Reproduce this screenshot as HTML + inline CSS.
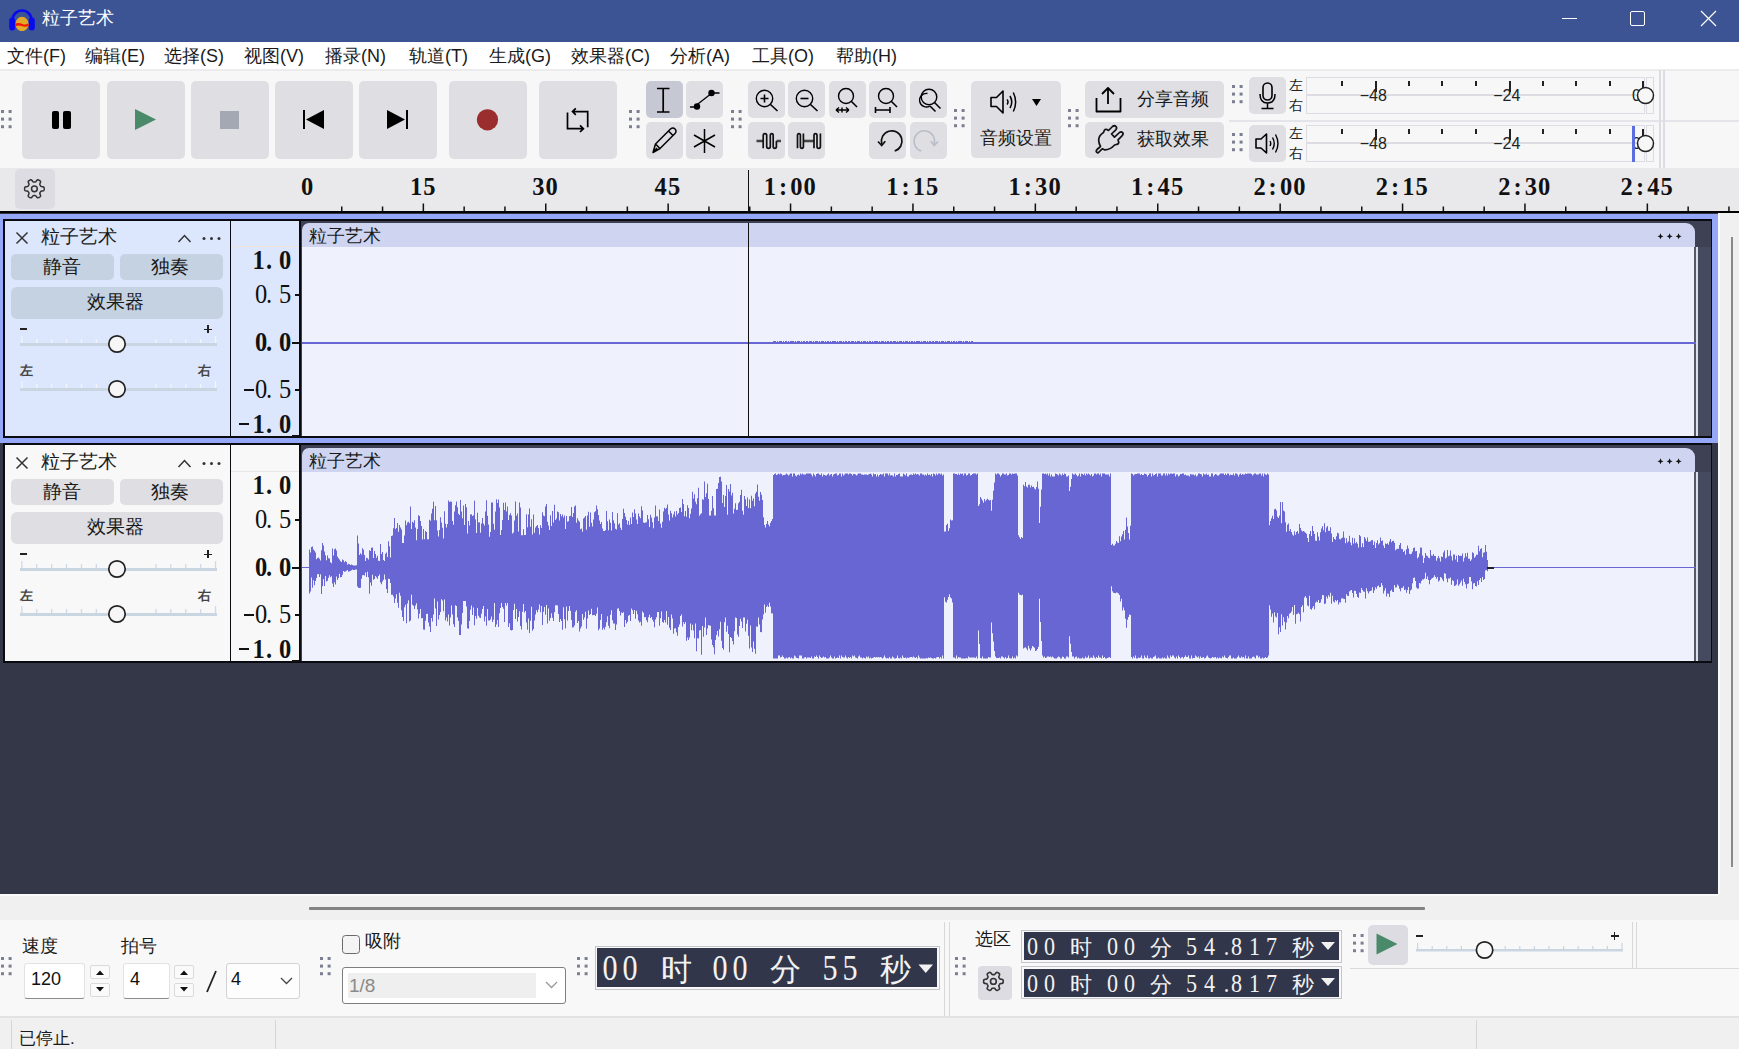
<!DOCTYPE html><html><head><meta charset="utf-8"><style>
html,body{margin:0;padding:0;width:1739px;height:1049px;overflow:hidden;background:#f0f0f0;font-family:"Liberation Sans",sans-serif}
</style></head><body>
<div style="position:absolute;left:0px;top:0px;width:1739px;height:41.5px;background:#3c5494;"></div>
<svg style="position:absolute;left:8px;top:5px;" width="28" height="26" viewBox="0 0 28 26"><path d="M4.5 15 A9.5 9.5 0 0 1 23.5 15" fill="none" stroke="#0a0af0" stroke-width="2.6"/>
<rect x="1.2" y="12.5" width="6" height="13" rx="3" fill="#0a0af0"/><rect x="20.8" y="12.5" width="6" height="13" rx="3" fill="#0a0af0"/>
<ellipse cx="14" cy="19" rx="6.6" ry="7.2" fill="#e4a92a"/><path d="M7.5 20 Q10 18.5 14 20 Q18 21.5 20.5 19.5" stroke="#f21a00" stroke-width="2.4" fill="none"/></svg>
<div style="position:absolute;left:42px;top:9px;font-family:'Liberation Sans',sans-serif;font-size:18px;color:#fff;white-space:nowrap;line-height:1;">粒子艺术</div>
<div style="position:absolute;left:1562px;top:17.6px;width:15px;height:1.2px;background:#fff;"></div>
<div style="position:absolute;left:1630px;top:11px;width:15px;height:15px;background:transparent;border:1.3px solid #fff;border-radius:2px;box-sizing:border-box"></div>
<svg style="position:absolute;left:1700px;top:10px;" width="18" height="18" viewBox="0 0 18 18"><path d="M1 1 L16 16 M16 1 L1 16" stroke="#fff" stroke-width="1.2"/></svg>
<div style="position:absolute;left:0px;top:41.5px;width:1739px;height:27.5px;background:#ffffff;"></div>
<div style="position:absolute;left:7px;top:47px;font-family:'Liberation Sans',sans-serif;font-size:18px;color:#1a1a1a;white-space:nowrap;line-height:1;font-weight:500">文件(F)</div>
<div style="position:absolute;left:85px;top:47px;font-family:'Liberation Sans',sans-serif;font-size:18px;color:#1a1a1a;white-space:nowrap;line-height:1;font-weight:500">编辑(E)</div>
<div style="position:absolute;left:164px;top:47px;font-family:'Liberation Sans',sans-serif;font-size:18px;color:#1a1a1a;white-space:nowrap;line-height:1;font-weight:500">选择(S)</div>
<div style="position:absolute;left:244px;top:47px;font-family:'Liberation Sans',sans-serif;font-size:18px;color:#1a1a1a;white-space:nowrap;line-height:1;font-weight:500">视图(V)</div>
<div style="position:absolute;left:325px;top:47px;font-family:'Liberation Sans',sans-serif;font-size:18px;color:#1a1a1a;white-space:nowrap;line-height:1;font-weight:500">播录(N)</div>
<div style="position:absolute;left:409px;top:47px;font-family:'Liberation Sans',sans-serif;font-size:18px;color:#1a1a1a;white-space:nowrap;line-height:1;font-weight:500">轨道(T)</div>
<div style="position:absolute;left:489px;top:47px;font-family:'Liberation Sans',sans-serif;font-size:18px;color:#1a1a1a;white-space:nowrap;line-height:1;font-weight:500">生成(G)</div>
<div style="position:absolute;left:571px;top:47px;font-family:'Liberation Sans',sans-serif;font-size:18px;color:#1a1a1a;white-space:nowrap;line-height:1;font-weight:500">效果器(C)</div>
<div style="position:absolute;left:670px;top:47px;font-family:'Liberation Sans',sans-serif;font-size:18px;color:#1a1a1a;white-space:nowrap;line-height:1;font-weight:500">分析(A)</div>
<div style="position:absolute;left:752px;top:47px;font-family:'Liberation Sans',sans-serif;font-size:18px;color:#1a1a1a;white-space:nowrap;line-height:1;font-weight:500">工具(O)</div>
<div style="position:absolute;left:836px;top:47px;font-family:'Liberation Sans',sans-serif;font-size:18px;color:#1a1a1a;white-space:nowrap;line-height:1;font-weight:500">帮助(H)</div>
<div style="position:absolute;left:0px;top:69px;width:1739px;height:2px;background:#ececee;"></div>
<div style="position:absolute;left:0px;top:71px;width:1739px;height:97px;background:#f7f7f7;"></div>
<svg style="position:absolute;left:1.2px;top:109.5px;" width="12" height="20" viewBox="0 0 12 20"><rect x="0.0" y="0.0" width="3" height="3" fill="#7c7f91"/><rect x="0.0" y="7.6" width="3" height="3" fill="#7c7f91"/><rect x="0.0" y="15.2" width="3" height="3" fill="#7c7f91"/><rect x="7.6" y="0.0" width="3" height="3" fill="#7c7f91"/><rect x="7.6" y="7.6" width="3" height="3" fill="#7c7f91"/><rect x="7.6" y="15.2" width="3" height="3" fill="#7c7f91"/></svg>
<div style="position:absolute;left:22px;top:81px;width:78px;height:78px;background:#dedee3;border-radius:5px"></div>
<div style="position:absolute;left:106.5px;top:81px;width:78px;height:78px;background:#dedee3;border-radius:5px"></div>
<div style="position:absolute;left:190.5px;top:81px;width:78px;height:78px;background:#dedee3;border-radius:5px"></div>
<div style="position:absolute;left:275px;top:81px;width:78px;height:78px;background:#dedee3;border-radius:5px"></div>
<div style="position:absolute;left:359px;top:81px;width:78px;height:78px;background:#dedee3;border-radius:5px"></div>
<div style="position:absolute;left:449px;top:81px;width:78px;height:78px;background:#dedee3;border-radius:5px"></div>
<div style="position:absolute;left:539px;top:81px;width:78px;height:78px;background:#dedee3;border-radius:5px"></div>
<div style="position:absolute;left:52px;top:111px;width:7px;height:18px;background:#000;border-radius:2px"></div>
<div style="position:absolute;left:63px;top:111px;width:8px;height:18px;background:#000;border-radius:2px"></div>
<svg style="position:absolute;left:134px;top:108px;" width="24" height="24" viewBox="0 0 24 24"><path d="M1 1 L22 11.5 L1 22 Z" fill="#4a8a6b"/></svg>
<div style="position:absolute;left:220px;top:111px;width:19px;height:18px;background:#a4a8b2;"></div>
<div style="position:absolute;left:303px;top:110px;width:2px;height:19px;background:#000;"></div>
<svg style="position:absolute;left:306px;top:110px;" width="19" height="19" viewBox="0 0 19 19"><path d="M18 0 L18 19 L0 9.5 Z" fill="#000"/></svg>
<svg style="position:absolute;left:387px;top:110px;" width="19" height="19" viewBox="0 0 19 19"><path d="M0 0 L0 19 L18 9.5 Z" fill="#000"/></svg>
<div style="position:absolute;left:406px;top:110px;width:2px;height:19px;background:#000;"></div>
<svg style="position:absolute;left:476px;top:108px;" width="24" height="24" viewBox="0 0 24 24"><circle cx="11.5" cy="11.8" r="10.6" fill="#9a2e2e"/></svg>
<svg style="position:absolute;left:564px;top:105px;" width="28" height="30" viewBox="0 0 28 30"><path d="M8.6 6.6 L23.7 6.6 L23.7 22.3 M11.8 3.3 L8.5 6.6 L11.8 9.9 M3.5 7.6 L3.5 23.7 L19.3 23.7 M16 20.4 L19.4 23.7 L16 27" fill="none" stroke="#000" stroke-width="1.7" stroke-linejoin="miter"/></svg>
<svg style="position:absolute;left:628.8px;top:109.5px;" width="12" height="20" viewBox="0 0 12 20"><rect x="0.0" y="0.0" width="3" height="3" fill="#7c7f91"/><rect x="0.0" y="7.6" width="3" height="3" fill="#7c7f91"/><rect x="0.0" y="15.2" width="3" height="3" fill="#7c7f91"/><rect x="7.6" y="0.0" width="3" height="3" fill="#7c7f91"/><rect x="7.6" y="7.6" width="3" height="3" fill="#7c7f91"/><rect x="7.6" y="15.2" width="3" height="3" fill="#7c7f91"/></svg>
<div style="position:absolute;left:645.5px;top:81px;width:37px;height:37px;background:#c6c8d4;border-radius:5px"></div>
<div style="position:absolute;left:686px;top:81px;width:37px;height:37px;background:#dedee3;border-radius:5px"></div>
<div style="position:absolute;left:645.5px;top:122px;width:37px;height:37px;background:#dedee3;border-radius:5px"></div>
<div style="position:absolute;left:686px;top:122px;width:37px;height:37px;background:#dedee3;border-radius:5px"></div>
<svg style="position:absolute;left:650px;top:84px;" width="28" height="31" viewBox="0 0 28 31"><path d="M7 4.5 L19.5 4.5 M7 28 L19.5 28 M13.2 4.5 L13.2 28" stroke="#000" stroke-width="1.7" fill="none"/></svg>
<svg style="position:absolute;left:686px;top:84px;" width="37" height="31" viewBox="0 0 37 31"><path d="M8 23 L26 9" stroke="#000" stroke-width="1.3"/><circle cx="11" cy="22.5" r="3.2" fill="#000"/><circle cx="25.5" cy="9" r="3.2" fill="#000"/><path d="M4 23 L11 23 M25 9 L33.5 9" stroke="#000" stroke-width="1.3"/></svg>
<svg style="position:absolute;left:650px;top:126px;" width="30" height="30" viewBox="0 0 30 30"><path d="M3 26.5 L5.5 18 L20.5 3 Q23 1 25 3 Q27 5 25 7.5 L10 22.5 Z M5.5 18 L10 22.5 M18.5 5 L23 9.5 M3 26.5 L7 22" fill="none" stroke="#000" stroke-width="1.5" stroke-linejoin="round"/></svg>
<svg style="position:absolute;left:690px;top:127px;" width="30" height="30" viewBox="0 0 30 30"><path d="M14.5 2 L14.5 26 M4 8 L25 20 M4 20 L25 8" stroke="#000" stroke-width="1.5"/></svg>
<svg style="position:absolute;left:730.8px;top:109.5px;" width="12" height="20" viewBox="0 0 12 20"><rect x="0.0" y="0.0" width="3" height="3" fill="#7c7f91"/><rect x="0.0" y="7.6" width="3" height="3" fill="#7c7f91"/><rect x="0.0" y="15.2" width="3" height="3" fill="#7c7f91"/><rect x="7.6" y="0.0" width="3" height="3" fill="#7c7f91"/><rect x="7.6" y="7.6" width="3" height="3" fill="#7c7f91"/><rect x="7.6" y="15.2" width="3" height="3" fill="#7c7f91"/></svg>
<div style="position:absolute;left:747.5px;top:81px;width:37px;height:37px;background:#dedee3;border-radius:5px"></div>
<div style="position:absolute;left:788px;top:81px;width:37px;height:37px;background:#dedee3;border-radius:5px"></div>
<div style="position:absolute;left:828.5px;top:81px;width:37px;height:37px;background:#dedee3;border-radius:5px"></div>
<div style="position:absolute;left:869px;top:81px;width:37px;height:37px;background:#dedee3;border-radius:5px"></div>
<div style="position:absolute;left:909.5px;top:81px;width:37px;height:37px;background:#dedee3;border-radius:5px"></div>
<div style="position:absolute;left:747.5px;top:122px;width:37px;height:37px;background:#dedee3;border-radius:5px"></div>
<div style="position:absolute;left:788px;top:122px;width:37px;height:37px;background:#dedee3;border-radius:5px"></div>
<div style="position:absolute;left:869px;top:122px;width:37px;height:37px;background:#dedee3;border-radius:5px"></div>
<div style="position:absolute;left:909.5px;top:122px;width:37px;height:37px;background:#dedee3;border-radius:5px"></div>
<svg style="position:absolute;left:747.5px;top:81px;" width="37" height="37" viewBox="0 0 37 37"><circle cx="16.5" cy="17.5" r="8.2" fill="none" stroke="#000" stroke-width="1.4"/><path d="M22.5 23.5 L29.5 30" stroke="#000" stroke-width="1.6"/><path d="M12.5 17.5 L20.5 17.5 M16.5 13.5 L16.5 21.5" stroke="#000" stroke-width="1.6"/></svg>
<svg style="position:absolute;left:788px;top:81px;" width="37" height="37" viewBox="0 0 37 37"><circle cx="16.5" cy="17.5" r="8.2" fill="none" stroke="#000" stroke-width="1.4"/><path d="M22.5 23.5 L29.5 30" stroke="#000" stroke-width="1.6"/><path d="M12.5 17.5 L20.5 17.5" stroke="#000" stroke-width="1.6"/></svg>
<svg style="position:absolute;left:828.5px;top:81px;" width="37" height="37" viewBox="0 0 37 37"><circle cx="17" cy="15" r="7.5" fill="none" stroke="#000" stroke-width="1.4"/><path d="M22.5 20.5 L28 26" stroke="#000" stroke-width="1.6"/><path d="M7 29 L20 29 M7 29 L10 26.5 M7 29 L10 31.5 M20 29 L17 26.5 M20 29 L17 31.5 M13 26.5 L13 31.5" stroke="#000" stroke-width="1.4" fill="none"/></svg>
<svg style="position:absolute;left:869px;top:81px;" width="37" height="37" viewBox="0 0 37 37"><circle cx="17" cy="15" r="7.5" fill="none" stroke="#000" stroke-width="1.4"/><path d="M22.5 20.5 L28 26" stroke="#000" stroke-width="1.6"/><path d="M6.5 29 L21 29 M6.5 26 L6.5 32 M21 26 L21 32" stroke="#000" stroke-width="1.6" fill="none"/></svg>
<svg style="position:absolute;left:909.5px;top:81px;" width="37" height="37" viewBox="0 0 37 37"><circle cx="19" cy="16" r="7.8" fill="none" stroke="#000" stroke-width="1.4"/><path d="M17.5 12.5 A6.8 6.8 0 1 0 20 25" fill="none" stroke="#000" stroke-width="1.4"/><path d="M24.5 21.5 L30.5 27.5 M20 25 L25.5 30.5" stroke="#000" stroke-width="1.5"/></svg>
<svg style="position:absolute;left:747.5px;top:122px;" width="37" height="37" viewBox="0 0 37 37"><path d="M8.5 19 L15 19 M28.5 19 L33 19" stroke="#444" stroke-width="2.6"/><path d="M15.2 26.3 L15.2 13.5 Q15.2 11.6 17 11.6 Q18.7 11.6 18.7 13.5 L18.7 24.5 Q18.7 26.3 20.5 26.3 Q22.3 26.3 22.3 24.5 L22.3 13.5 Q22.3 11.6 23.75 11.6 Q25.2 11.6 25.2 13.5 L25.2 24.5 Q25.2 26.3 26.8 26.3 Q28.4 26.3 28.4 24.5 L28.4 19" fill="none" stroke="#111" stroke-width="1.7"/></svg>
<svg style="position:absolute;left:788px;top:122px;" width="37" height="37" viewBox="0 0 37 37"><path d="M15.4 19 L26 19" stroke="#444" stroke-width="2.6"/><path d="M9.5 26.3 L9.5 13.5 Q9.5 11.6 11 11.6 Q12.4 11.6 12.4 13.5 L12.4 24.5 Q12.4 26.3 13.9 26.3 Q15.4 26.3 15.4 24.5 L15.4 11.6 M26 26.3 L26 13.5 Q26 11.6 27.5 11.6 Q29 11.6 29 13.5 L29 24.5 Q29 26.3 30.7 26.3 Q32.4 26.3 32.4 24.5 L32.4 11.6" fill="none" stroke="#111" stroke-width="1.7"/></svg>
<svg style="position:absolute;left:869px;top:122px;" width="37" height="37" viewBox="0 0 37 37"><path d="M12.8 22 A10.3 10.3 0 1 1 25.7 29" fill="none" stroke="#111" stroke-width="1.7"/><path d="M9 19.5 L12.7 23.5 L16.3 19.2" fill="none" stroke="#111" stroke-width="1.7"/></svg>
<svg style="position:absolute;left:909.5px;top:122px;" width="37" height="37" viewBox="0 0 37 37"><path d="M24.2 22 A10.3 10.3 0 1 0 11.3 29" fill="none" stroke="#b9bdc9" stroke-width="1.6"/><path d="M28 19.5 L24.3 23.5 L20.7 19.2" fill="none" stroke="#b9bdc9" stroke-width="1.6"/></svg>
<svg style="position:absolute;left:954.3px;top:109.3px;" width="12" height="20" viewBox="0 0 12 20"><rect x="0.0" y="0.0" width="3" height="3" fill="#7c7f91"/><rect x="0.0" y="7.6" width="3" height="3" fill="#7c7f91"/><rect x="0.0" y="15.2" width="3" height="3" fill="#7c7f91"/><rect x="7.6" y="0.0" width="3" height="3" fill="#7c7f91"/><rect x="7.6" y="7.6" width="3" height="3" fill="#7c7f91"/><rect x="7.6" y="15.2" width="3" height="3" fill="#7c7f91"/></svg>
<div style="position:absolute;left:971px;top:81px;width:90px;height:77px;background:#dedee3;border-radius:5px"></div>
<svg style="position:absolute;left:987px;top:87px;" width="40" height="30" viewBox="0 0 40 30"><path d="M4 10.5 L9.5 10.5 L16 4 L16 26 L9.5 19.5 L4 19.5 Z" fill="none" stroke="#000" stroke-width="1.6" stroke-linejoin="round"/><path d="M20 12.5 Q22 15 20 17.5 M23 9 Q26.5 15 23 21 M26.3 5.5 Q31 15 26.3 24.5" fill="none" stroke="#000" stroke-width="1.5"/></svg>
<svg style="position:absolute;left:1031px;top:98px;" width="12" height="9" viewBox="0 0 12 9"><path d="M1 1 L10 1 L5.5 8 Z" fill="#000"/></svg>
<div style="position:absolute;left:980px;top:128.5px;font-family:'Liberation Sans',sans-serif;font-size:18px;color:#1a1a1a;white-space:nowrap;line-height:1;font-weight:500">音频设置</div>
<svg style="position:absolute;left:1068.2px;top:108.9px;" width="12" height="20" viewBox="0 0 12 20"><rect x="0.0" y="0.0" width="3" height="3" fill="#7c7f91"/><rect x="0.0" y="7.6" width="3" height="3" fill="#7c7f91"/><rect x="0.0" y="15.2" width="3" height="3" fill="#7c7f91"/><rect x="7.6" y="0.0" width="3" height="3" fill="#7c7f91"/><rect x="7.6" y="7.6" width="3" height="3" fill="#7c7f91"/><rect x="7.6" y="15.2" width="3" height="3" fill="#7c7f91"/></svg>
<div style="position:absolute;left:1085px;top:81px;width:139px;height:37px;background:#dedee3;border-radius:5px"></div>
<div style="position:absolute;left:1085px;top:122px;width:139px;height:36px;background:#dedee3;border-radius:5px"></div>
<svg style="position:absolute;left:1094px;top:84px;" width="30" height="30" viewBox="0 0 30 30"><path d="M14 4 L14 20 M8 10 L14 4 L20 10" fill="none" stroke="#000" stroke-width="1.8" stroke-linejoin="round"/><path d="M2.5 14 L2.5 27.5 L26.5 27.5 L26.5 14" fill="none" stroke="#000" stroke-width="1.8" stroke-linejoin="round"/></svg>
<div style="position:absolute;left:1137px;top:90px;font-family:'Liberation Sans',sans-serif;font-size:18px;color:#1a1a1a;white-space:nowrap;line-height:1;font-weight:500">分享音频</div>
<svg style="position:absolute;left:1090px;top:120px;" width="40" height="40" viewBox="0 0 40 40"><path d="M7 32.5 Q5.5 31 7 29.5 L10.5 26.5 Q7.5 21 9.5 16.5 Q11 14 13.5 12.5 L14.5 10 Q15.5 8.8 17 9.6 L18.5 10.5 L22.5 6.5 Q24.5 5 26 6.5 Q27.3 8 25.8 9.8 L21.5 14 L24.5 17.2 L29.5 12.5 Q31.3 11.2 32.6 12.6 Q33.8 14.2 32 15.8 L28 19.8 L28.8 22.5 Q28.5 24 27 24.3 L24.6 25 Q20 30 14.5 29.8 L12.2 28.8 L9 32 Q8 33.5 7 32.5 Z" fill="none" stroke="#111" stroke-width="1.7" stroke-linejoin="round"/></svg>
<div style="position:absolute;left:1137px;top:130px;font-family:'Liberation Sans',sans-serif;font-size:18px;color:#1a1a1a;white-space:nowrap;line-height:1;font-weight:500">获取效果</div>
<svg style="position:absolute;left:1231.9px;top:85.2px;" width="12" height="20" viewBox="0 0 12 20"><rect x="0.0" y="0.0" width="3" height="3" fill="#7c7f91"/><rect x="0.0" y="7.6" width="3" height="3" fill="#7c7f91"/><rect x="0.0" y="15.2" width="3" height="3" fill="#7c7f91"/><rect x="7.6" y="0.0" width="3" height="3" fill="#7c7f91"/><rect x="7.6" y="7.6" width="3" height="3" fill="#7c7f91"/><rect x="7.6" y="15.2" width="3" height="3" fill="#7c7f91"/></svg>
<svg style="position:absolute;left:1231.9px;top:133.1px;" width="12" height="20" viewBox="0 0 12 20"><rect x="0.0" y="0.0" width="3" height="3" fill="#7c7f91"/><rect x="0.0" y="7.6" width="3" height="3" fill="#7c7f91"/><rect x="0.0" y="15.2" width="3" height="3" fill="#7c7f91"/><rect x="7.6" y="0.0" width="3" height="3" fill="#7c7f91"/><rect x="7.6" y="7.6" width="3" height="3" fill="#7c7f91"/><rect x="7.6" y="15.2" width="3" height="3" fill="#7c7f91"/></svg>
<div style="position:absolute;left:1249px;top:77px;width:37px;height:37px;background:#dedee3;border-radius:5px"></div>
<div style="position:absolute;left:1249px;top:125px;width:37px;height:37px;background:#dedee3;border-radius:5px"></div>
<svg style="position:absolute;left:1249px;top:77px;" width="37" height="37" viewBox="0 0 37 37"><rect x="14" y="6" width="9" height="17" rx="4.5" fill="none" stroke="#000" stroke-width="1.6"/><path d="M11 17 Q11 26 18.5 26 Q26 26 26 17 M18.5 26 L18.5 31 M12.5 31.5 L24.5 31.5" fill="none" stroke="#000" stroke-width="1.5"/></svg>
<svg style="position:absolute;left:1249px;top:125px;" width="37" height="37" viewBox="0 0 37 37"><path d="M7 14 L12 14 L17.5 9 L17.5 28 L12 23 L7 23 Z" fill="none" stroke="#000" stroke-width="1.6" stroke-linejoin="round"/><path d="M21 16 Q22.5 18.5 21 21 M23.5 12.5 Q27 18.5 23.5 24.5 M26.5 9.5 Q31.5 18.5 26.5 27.5" fill="none" stroke="#000" stroke-width="1.4"/></svg>
<div style="position:absolute;left:1229px;top:120px;width:510px;height:2px;background:#e4e4ea;"></div>
<div style="position:absolute;left:1289px;top:78px;font-family:'Liberation Sans',sans-serif;font-size:14px;color:#222;white-space:nowrap;line-height:1;">左</div>
<div style="position:absolute;left:1289px;top:98px;font-family:'Liberation Sans',sans-serif;font-size:14px;color:#222;white-space:nowrap;line-height:1;">右</div>
<div style="position:absolute;left:1305.5px;top:77px;width:339px;height:37px;background:transparent;border:1.5px solid #dcdce2;box-sizing:border-box"></div>
<div style="position:absolute;left:1307px;top:94px;width:336px;height:2px;background:#dcdce2;"></div>
<div style="position:absolute;left:1646px;top:77px;width:8px;height:37px;background:transparent;border:1.5px solid #dcdce2;box-sizing:border-box"></div>
<div style="position:absolute;left:1341px;top:81px;width:2px;height:5px;background:#222;"></div>
<div style="position:absolute;left:1408.4px;top:81px;width:2px;height:5px;background:#222;"></div>
<div style="position:absolute;left:1441.4px;top:81px;width:2px;height:5px;background:#222;"></div>
<div style="position:absolute;left:1474.5px;top:81px;width:2px;height:5px;background:#222;"></div>
<div style="position:absolute;left:1541.9px;top:81px;width:2px;height:5px;background:#222;"></div>
<div style="position:absolute;left:1574.9px;top:81px;width:2px;height:5px;background:#222;"></div>
<div style="position:absolute;left:1609.3px;top:81px;width:2px;height:5px;background:#222;"></div>
<div style="position:absolute;left:1375px;top:81px;width:2px;height:11px;background:#222;"></div>
<div style="position:absolute;left:1508.5px;top:81px;width:2px;height:11px;background:#222;"></div>
<div style="position:absolute;left:1642px;top:81px;width:2px;height:11px;background:#222;"></div>
<div style="position:absolute;left:1359.7px;top:88.3px;font-family:'Liberation Sans',sans-serif;font-size:16px;color:#222;white-space:nowrap;line-height:1;">&#8722;48</div>
<div style="position:absolute;left:1493.2px;top:88.3px;font-family:'Liberation Sans',sans-serif;font-size:16px;color:#222;white-space:nowrap;line-height:1;">&#8722;24</div>
<div style="position:absolute;left:1632px;top:88.3px;font-family:'Liberation Sans',sans-serif;font-size:16px;color:#222;white-space:nowrap;line-height:1;">0</div>
<svg style="position:absolute;left:1636px;top:86px;" width="20" height="20" viewBox="0 0 20 20"><circle cx="9.5" cy="9.5" r="8" fill="#f7f7f7" stroke="#222" stroke-width="1.5"/></svg>
<div style="position:absolute;left:1289px;top:126px;font-family:'Liberation Sans',sans-serif;font-size:14px;color:#222;white-space:nowrap;line-height:1;">左</div>
<div style="position:absolute;left:1289px;top:146px;font-family:'Liberation Sans',sans-serif;font-size:14px;color:#222;white-space:nowrap;line-height:1;">右</div>
<div style="position:absolute;left:1305.5px;top:125px;width:339px;height:37px;background:transparent;border:1.5px solid #dcdce2;box-sizing:border-box"></div>
<div style="position:absolute;left:1307px;top:142px;width:336px;height:2px;background:#dcdce2;"></div>
<div style="position:absolute;left:1646px;top:125px;width:8px;height:37px;background:transparent;border:1.5px solid #dcdce2;box-sizing:border-box"></div>
<div style="position:absolute;left:1341px;top:129px;width:2px;height:5px;background:#222;"></div>
<div style="position:absolute;left:1408.4px;top:129px;width:2px;height:5px;background:#222;"></div>
<div style="position:absolute;left:1441.4px;top:129px;width:2px;height:5px;background:#222;"></div>
<div style="position:absolute;left:1474.5px;top:129px;width:2px;height:5px;background:#222;"></div>
<div style="position:absolute;left:1541.9px;top:129px;width:2px;height:5px;background:#222;"></div>
<div style="position:absolute;left:1574.9px;top:129px;width:2px;height:5px;background:#222;"></div>
<div style="position:absolute;left:1609.3px;top:129px;width:2px;height:5px;background:#222;"></div>
<div style="position:absolute;left:1375px;top:129px;width:2px;height:11px;background:#222;"></div>
<div style="position:absolute;left:1508.5px;top:129px;width:2px;height:11px;background:#222;"></div>
<div style="position:absolute;left:1642px;top:129px;width:2px;height:11px;background:#222;"></div>
<div style="position:absolute;left:1359.7px;top:136.3px;font-family:'Liberation Sans',sans-serif;font-size:16px;color:#222;white-space:nowrap;line-height:1;">&#8722;48</div>
<div style="position:absolute;left:1493.2px;top:136.3px;font-family:'Liberation Sans',sans-serif;font-size:16px;color:#222;white-space:nowrap;line-height:1;">&#8722;24</div>
<div style="position:absolute;left:1632px;top:136.3px;font-family:'Liberation Sans',sans-serif;font-size:16px;color:#222;white-space:nowrap;line-height:1;">0</div>
<svg style="position:absolute;left:1636px;top:134px;" width="20" height="20" viewBox="0 0 20 20"><circle cx="9.5" cy="9.5" r="8" fill="#f7f7f7" stroke="#222" stroke-width="1.5"/></svg>
<div style="position:absolute;left:1632px;top:126px;width:3px;height:36px;background:#5b6ee0;"></div>
<div style="position:absolute;left:1659px;top:70px;width:1.5px;height:98px;background:#dcdce2;"></div>
<div style="position:absolute;left:1663px;top:70px;width:1.5px;height:98px;background:#dcdce2;"></div>
<div style="position:absolute;left:0px;top:168px;width:1739px;height:44px;background:#e9e9ec;"></div>
<div style="position:absolute;left:15px;top:169px;width:40px;height:40px;background:#dcdce2;border-radius:5px"></div>
<svg style="position:absolute;left:19px;top:174px;" width="30" height="30" viewBox="0 0 30 30"><g transform="translate(15.4,14.8)"><path d="M9.80 0.00 L9.79 0.43 L9.74 0.85 L9.65 1.27 L9.44 1.67 L8.95 1.98 L8.02 2.15 L7.09 2.24 L6.59 2.40 L6.34 2.63 L6.18 2.88 L6.04 3.14 L5.89 3.40 L5.74 3.66 L5.59 3.91 L5.45 4.18 L5.37 4.51 L5.48 5.02 L5.87 5.87 L6.19 6.76 L6.16 7.35 L5.93 7.72 L5.61 8.01 L5.26 8.26 L4.90 8.49 L4.52 8.69 L4.13 8.86 L3.73 8.99 L3.28 9.01 L2.76 8.74 L2.15 8.02 L1.61 7.26 L1.22 6.90 L0.90 6.81 L0.59 6.79 L0.30 6.80 L0.00 6.80 L-0.30 6.80 L-0.59 6.79 L-0.90 6.81 L-1.22 6.90 L-1.61 7.26 L-2.15 8.02 L-2.76 8.74 L-3.28 9.01 L-3.73 8.99 L-4.13 8.86 L-4.52 8.69 L-4.90 8.49 L-5.26 8.26 L-5.61 8.01 L-5.93 7.72 L-6.16 7.35 L-6.19 6.76 L-5.87 5.87 L-5.48 5.02 L-5.37 4.51 L-5.45 4.18 L-5.59 3.91 L-5.74 3.66 L-5.89 3.40 L-6.04 3.14 L-6.18 2.88 L-6.34 2.63 L-6.59 2.40 L-7.09 2.24 L-8.02 2.15 L-8.95 1.98 L-9.44 1.67 L-9.65 1.27 L-9.74 0.85 L-9.79 0.43 L-9.80 0.00 L-9.79 -0.43 L-9.74 -0.85 L-9.65 -1.27 L-9.44 -1.67 L-8.95 -1.98 L-8.02 -2.15 L-7.09 -2.24 L-6.59 -2.40 L-6.34 -2.63 L-6.18 -2.88 L-6.04 -3.14 L-5.89 -3.40 L-5.74 -3.66 L-5.59 -3.91 L-5.45 -4.18 L-5.37 -4.51 L-5.48 -5.02 L-5.87 -5.87 L-6.19 -6.76 L-6.16 -7.35 L-5.93 -7.72 L-5.61 -8.01 L-5.26 -8.26 L-4.90 -8.49 L-4.52 -8.69 L-4.13 -8.86 L-3.73 -8.99 L-3.28 -9.01 L-2.76 -8.74 L-2.15 -8.02 L-1.61 -7.26 L-1.22 -6.90 L-0.90 -6.81 L-0.59 -6.79 L-0.30 -6.80 L-0.00 -6.80 L0.30 -6.80 L0.59 -6.79 L0.90 -6.81 L1.22 -6.90 L1.61 -7.26 L2.15 -8.02 L2.76 -8.74 L3.28 -9.01 L3.73 -8.99 L4.13 -8.86 L4.52 -8.69 L4.90 -8.49 L5.26 -8.26 L5.61 -8.01 L5.93 -7.72 L6.16 -7.35 L6.19 -6.76 L5.87 -5.87 L5.48 -5.02 L5.37 -4.51 L5.45 -4.18 L5.59 -3.91 L5.74 -3.66 L5.89 -3.40 L6.04 -3.14 L6.18 -2.88 L6.34 -2.63 L6.59 -2.40 L7.09 -2.24 L8.02 -2.15 L8.95 -1.98 L9.44 -1.67 L9.65 -1.27 L9.74 -0.85 L9.79 -0.43 Z" fill="none" stroke="#333" stroke-width="1.5" stroke-linejoin="round"/><circle r="2.9" fill="none" stroke="#333" stroke-width="1.5"/></g></svg>
<div style="position:absolute;left:0px;top:211px;width:1739px;height:2px;background:#000;"></div>
<svg style="position:absolute;left:0px;top:168px;" width="1739" height="44" viewBox="0 0 1739 44"><g transform="translate(0,-168)"><rect x="341.0" y="206.5" width="1.5" height="4.5" fill="#111"/><rect x="381.8" y="206.5" width="1.5" height="4.5" fill="#111"/><rect x="422.6" y="203.5" width="1.5" height="7.5" fill="#111"/><rect x="463.4" y="206.5" width="1.5" height="4.5" fill="#111"/><rect x="504.2" y="206.5" width="1.5" height="4.5" fill="#111"/><rect x="545.0" y="203.5" width="1.5" height="7.5" fill="#111"/><rect x="585.8" y="206.5" width="1.5" height="4.5" fill="#111"/><rect x="626.6" y="206.5" width="1.5" height="4.5" fill="#111"/><rect x="667.4" y="203.5" width="1.5" height="7.5" fill="#111"/><rect x="708.2" y="206.5" width="1.5" height="4.5" fill="#111"/><rect x="749.0" y="206.5" width="1.5" height="4.5" fill="#111"/><rect x="789.8" y="203.5" width="1.5" height="7.5" fill="#111"/><rect x="830.6" y="206.5" width="1.5" height="4.5" fill="#111"/><rect x="871.4" y="206.5" width="1.5" height="4.5" fill="#111"/><rect x="912.2" y="203.5" width="1.5" height="7.5" fill="#111"/><rect x="953.0" y="206.5" width="1.5" height="4.5" fill="#111"/><rect x="993.8" y="206.5" width="1.5" height="4.5" fill="#111"/><rect x="1034.6" y="203.5" width="1.5" height="7.5" fill="#111"/><rect x="1075.4" y="206.5" width="1.5" height="4.5" fill="#111"/><rect x="1116.2" y="206.5" width="1.5" height="4.5" fill="#111"/><rect x="1157.0" y="203.5" width="1.5" height="7.5" fill="#111"/><rect x="1197.8" y="206.5" width="1.5" height="4.5" fill="#111"/><rect x="1238.6" y="206.5" width="1.5" height="4.5" fill="#111"/><rect x="1279.4" y="203.5" width="1.5" height="7.5" fill="#111"/><rect x="1320.2" y="206.5" width="1.5" height="4.5" fill="#111"/><rect x="1361.0" y="206.5" width="1.5" height="4.5" fill="#111"/><rect x="1401.8" y="203.5" width="1.5" height="7.5" fill="#111"/><rect x="1442.6" y="206.5" width="1.5" height="4.5" fill="#111"/><rect x="1483.4" y="206.5" width="1.5" height="4.5" fill="#111"/><rect x="1524.2" y="203.5" width="1.5" height="7.5" fill="#111"/><rect x="1565.0" y="206.5" width="1.5" height="4.5" fill="#111"/><rect x="1605.8" y="206.5" width="1.5" height="4.5" fill="#111"/><rect x="1646.6" y="203.5" width="1.5" height="7.5" fill="#111"/><rect x="1687.4" y="206.5" width="1.5" height="4.5" fill="#111"/><rect x="1728.2" y="206.5" width="1.5" height="4.5" fill="#111"/></g></svg>
<div style="position:absolute;left:282.5px;top:174.1px;font-family:'Liberation Serif',serif;font-size:24.5px;color:#111;white-space:nowrap;line-height:1;width:49.0px;text-align:center;font-weight:bold;transform:scale(1.0,1.07);transform-origin:50% 12.7px;">0</div>
<div style="position:absolute;left:391.5px;top:174.1px;font-family:'Liberation Serif',serif;font-size:24.5px;color:#111;white-space:nowrap;line-height:1;width:49.0px;text-align:center;font-weight:bold;transform:scale(1.0,1.07);transform-origin:50% 12.7px;">1</div>
<div style="position:absolute;left:404.8px;top:174.1px;font-family:'Liberation Serif',serif;font-size:24.5px;color:#111;white-space:nowrap;line-height:1;width:49.0px;text-align:center;font-weight:bold;transform:scale(1.0,1.07);transform-origin:50% 12.7px;">5</div>
<div style="position:absolute;left:513.9px;top:174.1px;font-family:'Liberation Serif',serif;font-size:24.5px;color:#111;white-space:nowrap;line-height:1;width:49.0px;text-align:center;font-weight:bold;transform:scale(1.0,1.07);transform-origin:50% 12.7px;">3</div>
<div style="position:absolute;left:527.1px;top:174.1px;font-family:'Liberation Serif',serif;font-size:24.5px;color:#111;white-space:nowrap;line-height:1;width:49.0px;text-align:center;font-weight:bold;transform:scale(1.0,1.07);transform-origin:50% 12.7px;">0</div>
<div style="position:absolute;left:636.2px;top:174.1px;font-family:'Liberation Serif',serif;font-size:24.5px;color:#111;white-space:nowrap;line-height:1;width:49.0px;text-align:center;font-weight:bold;transform:scale(1.0,1.07);transform-origin:50% 12.7px;">4</div>
<div style="position:absolute;left:649.5px;top:174.1px;font-family:'Liberation Serif',serif;font-size:24.5px;color:#111;white-space:nowrap;line-height:1;width:49.0px;text-align:center;font-weight:bold;transform:scale(1.0,1.07);transform-origin:50% 12.7px;">5</div>
<div style="position:absolute;left:745.3px;top:174.1px;font-family:'Liberation Serif',serif;font-size:24.5px;color:#111;white-space:nowrap;line-height:1;width:49.0px;text-align:center;font-weight:bold;transform:scale(1.0,1.07);transform-origin:50% 12.7px;">1</div>
<div style="position:absolute;left:758.6px;top:174.1px;font-family:'Liberation Serif',serif;font-size:24.5px;color:#111;white-space:nowrap;line-height:1;width:49.0px;text-align:center;font-weight:bold;transform:scale(1.0,1.07);transform-origin:50% 12.7px;">:</div>
<div style="position:absolute;left:771.9px;top:174.1px;font-family:'Liberation Serif',serif;font-size:24.5px;color:#111;white-space:nowrap;line-height:1;width:49.0px;text-align:center;font-weight:bold;transform:scale(1.0,1.07);transform-origin:50% 12.7px;">0</div>
<div style="position:absolute;left:785.2px;top:174.1px;font-family:'Liberation Serif',serif;font-size:24.5px;color:#111;white-space:nowrap;line-height:1;width:49.0px;text-align:center;font-weight:bold;transform:scale(1.0,1.07);transform-origin:50% 12.7px;">0</div>
<div style="position:absolute;left:867.8px;top:174.1px;font-family:'Liberation Serif',serif;font-size:24.5px;color:#111;white-space:nowrap;line-height:1;width:49.0px;text-align:center;font-weight:bold;transform:scale(1.0,1.07);transform-origin:50% 12.7px;">1</div>
<div style="position:absolute;left:881.0px;top:174.1px;font-family:'Liberation Serif',serif;font-size:24.5px;color:#111;white-space:nowrap;line-height:1;width:49.0px;text-align:center;font-weight:bold;transform:scale(1.0,1.07);transform-origin:50% 12.7px;">:</div>
<div style="position:absolute;left:894.4px;top:174.1px;font-family:'Liberation Serif',serif;font-size:24.5px;color:#111;white-space:nowrap;line-height:1;width:49.0px;text-align:center;font-weight:bold;transform:scale(1.0,1.07);transform-origin:50% 12.7px;">1</div>
<div style="position:absolute;left:907.6px;top:174.1px;font-family:'Liberation Serif',serif;font-size:24.5px;color:#111;white-space:nowrap;line-height:1;width:49.0px;text-align:center;font-weight:bold;transform:scale(1.0,1.07);transform-origin:50% 12.7px;">5</div>
<div style="position:absolute;left:990.1px;top:174.1px;font-family:'Liberation Serif',serif;font-size:24.5px;color:#111;white-space:nowrap;line-height:1;width:49.0px;text-align:center;font-weight:bold;transform:scale(1.0,1.07);transform-origin:50% 12.7px;">1</div>
<div style="position:absolute;left:1003.4px;top:174.1px;font-family:'Liberation Serif',serif;font-size:24.5px;color:#111;white-space:nowrap;line-height:1;width:49.0px;text-align:center;font-weight:bold;transform:scale(1.0,1.07);transform-origin:50% 12.7px;">:</div>
<div style="position:absolute;left:1016.7px;top:174.1px;font-family:'Liberation Serif',serif;font-size:24.5px;color:#111;white-space:nowrap;line-height:1;width:49.0px;text-align:center;font-weight:bold;transform:scale(1.0,1.07);transform-origin:50% 12.7px;">3</div>
<div style="position:absolute;left:1030.0px;top:174.1px;font-family:'Liberation Serif',serif;font-size:24.5px;color:#111;white-space:nowrap;line-height:1;width:49.0px;text-align:center;font-weight:bold;transform:scale(1.0,1.07);transform-origin:50% 12.7px;">0</div>
<div style="position:absolute;left:1112.5px;top:174.1px;font-family:'Liberation Serif',serif;font-size:24.5px;color:#111;white-space:nowrap;line-height:1;width:49.0px;text-align:center;font-weight:bold;transform:scale(1.0,1.07);transform-origin:50% 12.7px;">1</div>
<div style="position:absolute;left:1125.8px;top:174.1px;font-family:'Liberation Serif',serif;font-size:24.5px;color:#111;white-space:nowrap;line-height:1;width:49.0px;text-align:center;font-weight:bold;transform:scale(1.0,1.07);transform-origin:50% 12.7px;">:</div>
<div style="position:absolute;left:1139.1px;top:174.1px;font-family:'Liberation Serif',serif;font-size:24.5px;color:#111;white-space:nowrap;line-height:1;width:49.0px;text-align:center;font-weight:bold;transform:scale(1.0,1.07);transform-origin:50% 12.7px;">4</div>
<div style="position:absolute;left:1152.5px;top:174.1px;font-family:'Liberation Serif',serif;font-size:24.5px;color:#111;white-space:nowrap;line-height:1;width:49.0px;text-align:center;font-weight:bold;transform:scale(1.0,1.07);transform-origin:50% 12.7px;">5</div>
<div style="position:absolute;left:1235.0px;top:174.1px;font-family:'Liberation Serif',serif;font-size:24.5px;color:#111;white-space:nowrap;line-height:1;width:49.0px;text-align:center;font-weight:bold;transform:scale(1.0,1.07);transform-origin:50% 12.7px;">2</div>
<div style="position:absolute;left:1248.2px;top:174.1px;font-family:'Liberation Serif',serif;font-size:24.5px;color:#111;white-space:nowrap;line-height:1;width:49.0px;text-align:center;font-weight:bold;transform:scale(1.0,1.07);transform-origin:50% 12.7px;">:</div>
<div style="position:absolute;left:1261.5px;top:174.1px;font-family:'Liberation Serif',serif;font-size:24.5px;color:#111;white-space:nowrap;line-height:1;width:49.0px;text-align:center;font-weight:bold;transform:scale(1.0,1.07);transform-origin:50% 12.7px;">0</div>
<div style="position:absolute;left:1274.9px;top:174.1px;font-family:'Liberation Serif',serif;font-size:24.5px;color:#111;white-space:nowrap;line-height:1;width:49.0px;text-align:center;font-weight:bold;transform:scale(1.0,1.07);transform-origin:50% 12.7px;">0</div>
<div style="position:absolute;left:1357.3px;top:174.1px;font-family:'Liberation Serif',serif;font-size:24.5px;color:#111;white-space:nowrap;line-height:1;width:49.0px;text-align:center;font-weight:bold;transform:scale(1.0,1.07);transform-origin:50% 12.7px;">2</div>
<div style="position:absolute;left:1370.6px;top:174.1px;font-family:'Liberation Serif',serif;font-size:24.5px;color:#111;white-space:nowrap;line-height:1;width:49.0px;text-align:center;font-weight:bold;transform:scale(1.0,1.07);transform-origin:50% 12.7px;">:</div>
<div style="position:absolute;left:1383.9px;top:174.1px;font-family:'Liberation Serif',serif;font-size:24.5px;color:#111;white-space:nowrap;line-height:1;width:49.0px;text-align:center;font-weight:bold;transform:scale(1.0,1.07);transform-origin:50% 12.7px;">1</div>
<div style="position:absolute;left:1397.2px;top:174.1px;font-family:'Liberation Serif',serif;font-size:24.5px;color:#111;white-space:nowrap;line-height:1;width:49.0px;text-align:center;font-weight:bold;transform:scale(1.0,1.07);transform-origin:50% 12.7px;">5</div>
<div style="position:absolute;left:1479.8px;top:174.1px;font-family:'Liberation Serif',serif;font-size:24.5px;color:#111;white-space:nowrap;line-height:1;width:49.0px;text-align:center;font-weight:bold;transform:scale(1.0,1.07);transform-origin:50% 12.7px;">2</div>
<div style="position:absolute;left:1493.0px;top:174.1px;font-family:'Liberation Serif',serif;font-size:24.5px;color:#111;white-space:nowrap;line-height:1;width:49.0px;text-align:center;font-weight:bold;transform:scale(1.0,1.07);transform-origin:50% 12.7px;">:</div>
<div style="position:absolute;left:1506.3px;top:174.1px;font-family:'Liberation Serif',serif;font-size:24.5px;color:#111;white-space:nowrap;line-height:1;width:49.0px;text-align:center;font-weight:bold;transform:scale(1.0,1.07);transform-origin:50% 12.7px;">3</div>
<div style="position:absolute;left:1519.7px;top:174.1px;font-family:'Liberation Serif',serif;font-size:24.5px;color:#111;white-space:nowrap;line-height:1;width:49.0px;text-align:center;font-weight:bold;transform:scale(1.0,1.07);transform-origin:50% 12.7px;">0</div>
<div style="position:absolute;left:1602.2px;top:174.1px;font-family:'Liberation Serif',serif;font-size:24.5px;color:#111;white-space:nowrap;line-height:1;width:49.0px;text-align:center;font-weight:bold;transform:scale(1.0,1.07);transform-origin:50% 12.7px;">2</div>
<div style="position:absolute;left:1615.5px;top:174.1px;font-family:'Liberation Serif',serif;font-size:24.5px;color:#111;white-space:nowrap;line-height:1;width:49.0px;text-align:center;font-weight:bold;transform:scale(1.0,1.07);transform-origin:50% 12.7px;">:</div>
<div style="position:absolute;left:1628.8px;top:174.1px;font-family:'Liberation Serif',serif;font-size:24.5px;color:#111;white-space:nowrap;line-height:1;width:49.0px;text-align:center;font-weight:bold;transform:scale(1.0,1.07);transform-origin:50% 12.7px;">4</div>
<div style="position:absolute;left:1642.1px;top:174.1px;font-family:'Liberation Serif',serif;font-size:24.5px;color:#111;white-space:nowrap;line-height:1;width:49.0px;text-align:center;font-weight:bold;transform:scale(1.0,1.07);transform-origin:50% 12.7px;">5</div>
<div style="position:absolute;left:747.5px;top:170px;width:1.5px;height:42px;background:#111;"></div>
<div style="position:absolute;left:0px;top:213px;width:1718px;height:681px;background:#343748;"></div>
<div style="position:absolute;left:1718px;top:213px;width:21px;height:681px;background:#f0f0f0;"></div>
<div style="position:absolute;left:1718px;top:213px;width:1.5px;height:681px;background:#fafafa;"></div>
<div style="position:absolute;left:1730.5px;top:237px;width:2.8px;height:630px;background:#8a8a8a;"></div>
<div style="position:absolute;left:0px;top:214px;width:1717.5px;height:229px;background:#95a7f7;"></div>
<div style="position:absolute;left:3px;top:219px;width:1709px;height:219px;background:#0a0b10;"></div>
<div style="position:absolute;left:5px;top:221px;width:225px;height:215px;background:#dce6fc;"></div>
<div style="position:absolute;left:231.3px;top:221px;width:67.5px;height:215px;background:#dce6fc;"></div>
<div style="position:absolute;left:301.2px;top:221px;width:1409.5px;height:215px;background:#3e4153;"></div>
<div style="position:absolute;left:1697.5px;top:247px;width:13.2px;height:189px;background:#464a5e;"></div>
<div style="position:absolute;left:302px;top:222.5px;width:1393px;height:24.5px;background:#cfd5f1;border-top-left-radius:7px;border-top-right-radius:9px"></div>
<div style="position:absolute;left:302px;top:247px;width:1392px;height:189px;background:#eff1fd;"></div>
<div style="position:absolute;left:1694px;top:247px;width:2px;height:189px;background:#555a66;"></div>
<div style="position:absolute;left:1696px;top:247px;width:1.5px;height:189px;background:#dfe1ea;"></div>
<svg style="position:absolute;left:14px;top:230px;" width="18" height="16" viewBox="0 0 18 16"><path d="M2.5 2.5 L13.5 13.5 M13.5 2.5 L2.5 13.5" stroke="#333" stroke-width="1.5"/></svg>
<div style="position:absolute;left:41px;top:227px;font-family:'Liberation Sans',sans-serif;font-size:19px;color:#1a1a1a;white-space:nowrap;line-height:1;">粒子艺术</div>
<svg style="position:absolute;left:174px;top:231px;" width="20" height="14" viewBox="0 0 20 14"><path d="M4.5 11 L10.5 4.5 L16.5 11" fill="none" stroke="#333" stroke-width="1.5"/></svg>
<svg style="position:absolute;left:200px;top:234px;" width="24" height="8" viewBox="0 0 24 8"><circle cx="4" cy="4.5" r="1.5" fill="#333"/><circle cx="11.5" cy="4.5" r="1.5" fill="#333"/><circle cx="19" cy="4.5" r="1.5" fill="#333"/></svg>
<div style="position:absolute;left:11px;top:254px;width:103px;height:26px;background:#c4d2e2;border-radius:5px"></div>
<div style="position:absolute;left:120px;top:254px;width:103px;height:26px;background:#c4d2e2;border-radius:5px"></div>
<div style="position:absolute;left:11px;top:287px;width:212px;height:32px;background:#c4d2e2;border-radius:6px"></div>
<div style="position:absolute;left:43px;top:257px;font-family:'Liberation Sans',sans-serif;font-size:19px;color:#1a1a1a;white-space:nowrap;line-height:1;">静音</div>
<div style="position:absolute;left:151px;top:257px;font-family:'Liberation Sans',sans-serif;font-size:19px;color:#1a1a1a;white-space:nowrap;line-height:1;">独奏</div>
<div style="position:absolute;left:87px;top:292px;font-family:'Liberation Sans',sans-serif;font-size:19px;color:#1a1a1a;white-space:nowrap;line-height:1;">效果器</div>
<div style="position:absolute;left:19.5px;top:328px;width:7px;height:1.8px;background:#222;"></div>
<div style="position:absolute;left:204px;top:328.5px;width:8px;height:1.8px;background:#222;"></div>
<div style="position:absolute;left:207.2px;top:325.3px;width:1.8px;height:8px;background:#222;"></div>
<div style="position:absolute;left:20px;top:365px;font-family:'Liberation Sans',sans-serif;font-size:12.5px;color:#444;white-space:nowrap;line-height:1;font-weight:bold">左</div>
<div style="position:absolute;left:198px;top:365px;font-family:'Liberation Sans',sans-serif;font-size:12.5px;color:#444;white-space:nowrap;line-height:1;font-weight:bold">右</div>
<svg style="position:absolute;left:19.5px;top:334.7px;" width="200" height="12" viewBox="0 0 200 12"><rect x="0" y="8" width="197" height="3" fill="#c9d5e1"/><rect x="1.2" y="1" width="1.3" height="7" fill="#f2f5f9"/><rect x="16.1" y="4" width="1.3" height="4" fill="#f2f5f9"/><rect x="31.0" y="4" width="1.3" height="4" fill="#f2f5f9"/><rect x="45.9" y="4" width="1.3" height="4" fill="#f2f5f9"/><rect x="60.8" y="4" width="1.3" height="4" fill="#f2f5f9"/><rect x="75.7" y="4" width="1.3" height="4" fill="#f2f5f9"/><rect x="90.6" y="4" width="1.3" height="4" fill="#f2f5f9"/><rect x="135.3" y="4" width="1.3" height="4" fill="#f2f5f9"/><rect x="150.2" y="4" width="1.3" height="4" fill="#f2f5f9"/><rect x="165.1" y="4" width="1.3" height="4" fill="#f2f5f9"/><rect x="180.0" y="4" width="1.3" height="4" fill="#f2f5f9"/><rect x="194.9" y="1" width="1.3" height="7" fill="#f2f5f9"/></svg>
<svg style="position:absolute;left:107px;top:333.7px;" width="20" height="20" viewBox="0 0 20 20"><circle cx="10" cy="10" r="8.2" fill="#f6f6f6" stroke="#222" stroke-width="1.7"/></svg>
<svg style="position:absolute;left:19.5px;top:379.6px;" width="200" height="12" viewBox="0 0 200 12"><rect x="0" y="8" width="197" height="3" fill="#c9d5e1"/><rect x="1.2" y="1" width="1.3" height="7" fill="#f2f5f9"/><rect x="16.1" y="4" width="1.3" height="4" fill="#f2f5f9"/><rect x="31.0" y="4" width="1.3" height="4" fill="#f2f5f9"/><rect x="45.9" y="4" width="1.3" height="4" fill="#f2f5f9"/><rect x="60.8" y="4" width="1.3" height="4" fill="#f2f5f9"/><rect x="75.7" y="4" width="1.3" height="4" fill="#f2f5f9"/><rect x="90.6" y="4" width="1.3" height="4" fill="#f2f5f9"/><rect x="135.3" y="4" width="1.3" height="4" fill="#f2f5f9"/><rect x="150.2" y="4" width="1.3" height="4" fill="#f2f5f9"/><rect x="165.1" y="4" width="1.3" height="4" fill="#f2f5f9"/><rect x="180.0" y="4" width="1.3" height="4" fill="#f2f5f9"/><rect x="194.9" y="1" width="1.3" height="7" fill="#f2f5f9"/></svg>
<svg style="position:absolute;left:107px;top:378.6px;" width="20" height="20" viewBox="0 0 20 20"><circle cx="10" cy="10" r="8.2" fill="#f6f6f6" stroke="#222" stroke-width="1.7"/></svg>
<div style="position:absolute;left:231.3px;top:246px;width:67.5px;height:1px;background:#f0e4da;"></div>
<div style="position:absolute;left:234.0px;top:247.7px;font-family:'Liberation Serif',serif;font-size:24.5px;color:#111;white-space:nowrap;line-height:1;width:49.0px;text-align:center;font-weight:bold;transform:scale(1.0,1.08);transform-origin:50% 12.7px;">1</div>
<div style="position:absolute;left:244.5px;top:247.7px;font-family:'Liberation Serif',serif;font-size:24.5px;color:#111;white-space:nowrap;line-height:1;width:49.0px;text-align:center;font-weight:bold;transform:scale(1.0,1.08);transform-origin:50% 12.7px;">.</div>
<div style="position:absolute;left:260.5px;top:247.7px;font-family:'Liberation Serif',serif;font-size:24.5px;color:#111;white-space:nowrap;line-height:1;width:49.0px;text-align:center;font-weight:bold;transform:scale(1.0,1.08);transform-origin:50% 12.7px;">0</div>
<div style="position:absolute;left:236.5px;top:281.8px;font-family:'Liberation Serif',serif;font-size:24.5px;color:#111;white-space:nowrap;line-height:1;width:49.0px;text-align:center;font-weight:normal;transform:scale(1.0,1.08);transform-origin:50% 12.7px;">0</div>
<div style="position:absolute;left:244.5px;top:281.8px;font-family:'Liberation Serif',serif;font-size:24.5px;color:#111;white-space:nowrap;line-height:1;width:49.0px;text-align:center;font-weight:normal;transform:scale(1.0,1.08);transform-origin:50% 12.7px;">.</div>
<div style="position:absolute;left:260.5px;top:281.8px;font-family:'Liberation Serif',serif;font-size:24.5px;color:#111;white-space:nowrap;line-height:1;width:49.0px;text-align:center;font-weight:normal;transform:scale(1.0,1.08);transform-origin:50% 12.7px;">5</div>
<div style="position:absolute;left:236.5px;top:330.3px;font-family:'Liberation Serif',serif;font-size:24.5px;color:#111;white-space:nowrap;line-height:1;width:49.0px;text-align:center;font-weight:bold;transform:scale(1.0,1.08);transform-origin:50% 12.7px;">0</div>
<div style="position:absolute;left:244.5px;top:330.3px;font-family:'Liberation Serif',serif;font-size:24.5px;color:#111;white-space:nowrap;line-height:1;width:49.0px;text-align:center;font-weight:bold;transform:scale(1.0,1.08);transform-origin:50% 12.7px;">.</div>
<div style="position:absolute;left:260.5px;top:330.3px;font-family:'Liberation Serif',serif;font-size:24.5px;color:#111;white-space:nowrap;line-height:1;width:49.0px;text-align:center;font-weight:bold;transform:scale(1.0,1.08);transform-origin:50% 12.7px;">0</div>
<div style="position:absolute;left:243.7px;top:388.8px;width:10px;height:2px;background:#111;"></div>
<div style="position:absolute;left:236.5px;top:377.1px;font-family:'Liberation Serif',serif;font-size:24.5px;color:#111;white-space:nowrap;line-height:1;width:49.0px;text-align:center;font-weight:normal;transform:scale(1.0,1.08);transform-origin:50% 12.7px;">0</div>
<div style="position:absolute;left:244.5px;top:377.1px;font-family:'Liberation Serif',serif;font-size:24.5px;color:#111;white-space:nowrap;line-height:1;width:49.0px;text-align:center;font-weight:normal;transform:scale(1.0,1.08);transform-origin:50% 12.7px;">.</div>
<div style="position:absolute;left:260.5px;top:377.1px;font-family:'Liberation Serif',serif;font-size:24.5px;color:#111;white-space:nowrap;line-height:1;width:49.0px;text-align:center;font-weight:normal;transform:scale(1.0,1.08);transform-origin:50% 12.7px;">5</div>
<div style="position:absolute;left:238.6px;top:423.2px;width:10px;height:2px;background:#111;"></div>
<div style="position:absolute;left:234.0px;top:411.5px;font-family:'Liberation Serif',serif;font-size:24.5px;color:#111;white-space:nowrap;line-height:1;width:49.0px;text-align:center;font-weight:bold;transform:scale(1.0,1.08);transform-origin:50% 12.7px;">1</div>
<div style="position:absolute;left:244.5px;top:411.5px;font-family:'Liberation Serif',serif;font-size:24.5px;color:#111;white-space:nowrap;line-height:1;width:49.0px;text-align:center;font-weight:bold;transform:scale(1.0,1.08);transform-origin:50% 12.7px;">.</div>
<div style="position:absolute;left:260.5px;top:411.5px;font-family:'Liberation Serif',serif;font-size:24.5px;color:#111;white-space:nowrap;line-height:1;width:49.0px;text-align:center;font-weight:bold;transform:scale(1.0,1.08);transform-origin:50% 12.7px;">0</div>
<div style="position:absolute;left:292px;top:341.5px;width:7px;height:2.5px;background:#111;"></div>
<div style="position:absolute;left:294.5px;top:294px;width:4.5px;height:1.5px;background:#111;"></div>
<div style="position:absolute;left:294.5px;top:389px;width:4.5px;height:1.5px;background:#111;"></div>
<div style="position:absolute;left:292px;top:434.5px;width:7px;height:2px;background:#111;"></div>
<div style="position:absolute;left:309px;top:227px;font-family:'Liberation Sans',sans-serif;font-size:18px;color:#1a1a1a;white-space:nowrap;line-height:1;">粒子艺术</div>
<svg style="position:absolute;left:1655px;top:230px;" width="30" height="12" viewBox="0 0 30 12"><g fill="#111"><path transform="translate(5.5,6.3)" d="M0 -3 L0.9 -0.9 L3 0 L0.9 0.9 L0 3 L-0.9 0.9 L-3 0 L-0.9 -0.9 Z"/><path transform="translate(14.6,6.3)" d="M0 -3 L0.9 -0.9 L3 0 L0.9 0.9 L0 3 L-0.9 0.9 L-3 0 L-0.9 -0.9 Z"/><path transform="translate(23.6,6.3)" d="M0 -3 L0.9 -0.9 L3 0 L0.9 0.9 L0 3 L-0.9 0.9 L-3 0 L-0.9 -0.9 Z"/></g></svg>
<div style="position:absolute;left:302px;top:342.3px;width:1394px;height:1.3px;background:#6766d3;"></div>
<div style="position:absolute;left:747.5px;top:222.5px;width:1.6px;height:214px;background:#111;"></div>
<svg style="position:absolute;left:773px;top:340.5px;" width="201" height="3" viewBox="0 0 201 3"><rect x="0" y="0" width="3" height="3" fill="#6766d3"/><rect x="4" y="0" width="1" height="3" fill="#6766d3"/><rect x="6" y="0" width="3" height="3" fill="#6766d3"/><rect x="10" y="0" width="1" height="3" fill="#6766d3"/><rect x="12" y="0" width="2" height="3" fill="#6766d3"/><rect x="15" y="0" width="1" height="3" fill="#6766d3"/><rect x="17" y="0" width="4" height="3" fill="#6766d3"/><rect x="22" y="0" width="1" height="3" fill="#6766d3"/><rect x="24" y="0" width="3" height="3" fill="#6766d3"/><rect x="28" y="0" width="1" height="3" fill="#6766d3"/><rect x="30" y="0" width="2" height="3" fill="#6766d3"/><rect x="33" y="0" width="2" height="3" fill="#6766d3"/><rect x="36" y="0" width="3" height="3" fill="#6766d3"/><rect x="40" y="0" width="1" height="3" fill="#6766d3"/><rect x="42" y="0" width="3" height="3" fill="#6766d3"/><rect x="46" y="0" width="1" height="3" fill="#6766d3"/><rect x="48" y="0" width="3" height="3" fill="#6766d3"/><rect x="52" y="0" width="1" height="3" fill="#6766d3"/><rect x="54" y="0" width="2" height="3" fill="#6766d3"/><rect x="57" y="0" width="1" height="3" fill="#6766d3"/><rect x="59" y="0" width="4" height="3" fill="#6766d3"/><rect x="64" y="0" width="1" height="3" fill="#6766d3"/><rect x="66" y="0" width="3" height="3" fill="#6766d3"/><rect x="70" y="0" width="1" height="3" fill="#6766d3"/><rect x="72" y="0" width="2" height="3" fill="#6766d3"/><rect x="75" y="0" width="2" height="3" fill="#6766d3"/><rect x="78" y="0" width="3" height="3" fill="#6766d3"/><rect x="82" y="0" width="1" height="3" fill="#6766d3"/><rect x="84" y="0" width="3" height="3" fill="#6766d3"/><rect x="88" y="0" width="1" height="3" fill="#6766d3"/><rect x="90" y="0" width="3" height="3" fill="#6766d3"/><rect x="94" y="0" width="1" height="3" fill="#6766d3"/><rect x="96" y="0" width="2" height="3" fill="#6766d3"/><rect x="99" y="0" width="1" height="3" fill="#6766d3"/><rect x="101" y="0" width="4" height="3" fill="#6766d3"/><rect x="106" y="0" width="1" height="3" fill="#6766d3"/><rect x="108" y="0" width="3" height="3" fill="#6766d3"/><rect x="112" y="0" width="1" height="3" fill="#6766d3"/><rect x="114" y="0" width="2" height="3" fill="#6766d3"/><rect x="117" y="0" width="2" height="3" fill="#6766d3"/><rect x="120" y="0" width="3" height="3" fill="#6766d3"/><rect x="124" y="0" width="1" height="3" fill="#6766d3"/><rect x="126" y="0" width="3" height="3" fill="#6766d3"/><rect x="130" y="0" width="1" height="3" fill="#6766d3"/><rect x="132" y="0" width="3" height="3" fill="#6766d3"/><rect x="136" y="0" width="1" height="3" fill="#6766d3"/><rect x="138" y="0" width="2" height="3" fill="#6766d3"/><rect x="141" y="0" width="1" height="3" fill="#6766d3"/><rect x="143" y="0" width="4" height="3" fill="#6766d3"/><rect x="148" y="0" width="1" height="3" fill="#6766d3"/><rect x="150" y="0" width="3" height="3" fill="#6766d3"/><rect x="154" y="0" width="1" height="3" fill="#6766d3"/><rect x="156" y="0" width="2" height="3" fill="#6766d3"/><rect x="159" y="0" width="2" height="3" fill="#6766d3"/><rect x="162" y="0" width="3" height="3" fill="#6766d3"/><rect x="166" y="0" width="1" height="3" fill="#6766d3"/><rect x="168" y="0" width="3" height="3" fill="#6766d3"/><rect x="172" y="0" width="1" height="3" fill="#6766d3"/><rect x="174" y="0" width="3" height="3" fill="#6766d3"/><rect x="178" y="0" width="1" height="3" fill="#6766d3"/><rect x="180" y="0" width="2" height="3" fill="#6766d3"/><rect x="183" y="0" width="1" height="3" fill="#6766d3"/><rect x="185" y="0" width="4" height="3" fill="#6766d3"/><rect x="190" y="0" width="1" height="3" fill="#6766d3"/><rect x="192" y="0" width="3" height="3" fill="#6766d3"/><rect x="196" y="0" width="1" height="3" fill="#6766d3"/><rect x="198" y="0" width="2" height="3" fill="#6766d3"/></svg>
<div style="position:absolute;left:3px;top:443px;width:1709px;height:220px;background:#0a0b10;"></div>
<div style="position:absolute;left:5px;top:445px;width:225px;height:216px;background:#f8f8f8;"></div>
<div style="position:absolute;left:231.3px;top:445px;width:67.5px;height:216px;background:#f8f8f8;"></div>
<div style="position:absolute;left:301.2px;top:445px;width:1409.5px;height:216px;background:#3e4153;"></div>
<div style="position:absolute;left:1697.5px;top:472px;width:13.2px;height:189px;background:#464a5e;"></div>
<div style="position:absolute;left:302px;top:447.5px;width:1393px;height:24.5px;background:#cfd5f1;border-top-left-radius:7px;border-top-right-radius:9px"></div>
<div style="position:absolute;left:302px;top:472px;width:1392px;height:189px;background:#eff1fd;"></div>
<div style="position:absolute;left:1694px;top:472px;width:2px;height:189px;background:#555a66;"></div>
<div style="position:absolute;left:1696px;top:472px;width:1.5px;height:189px;background:#dfe1ea;"></div>
<svg style="position:absolute;left:14px;top:455px;" width="18" height="16" viewBox="0 0 18 16"><path d="M2.5 2.5 L13.5 13.5 M13.5 2.5 L2.5 13.5" stroke="#333" stroke-width="1.5"/></svg>
<div style="position:absolute;left:41px;top:452px;font-family:'Liberation Sans',sans-serif;font-size:19px;color:#1a1a1a;white-space:nowrap;line-height:1;">粒子艺术</div>
<svg style="position:absolute;left:174px;top:456px;" width="20" height="14" viewBox="0 0 20 14"><path d="M4.5 11 L10.5 4.5 L16.5 11" fill="none" stroke="#333" stroke-width="1.5"/></svg>
<svg style="position:absolute;left:200px;top:459px;" width="24" height="8" viewBox="0 0 24 8"><circle cx="4" cy="4.5" r="1.5" fill="#333"/><circle cx="11.5" cy="4.5" r="1.5" fill="#333"/><circle cx="19" cy="4.5" r="1.5" fill="#333"/></svg>
<div style="position:absolute;left:11px;top:479px;width:103px;height:26px;background:#dedee3;border-radius:5px"></div>
<div style="position:absolute;left:120px;top:479px;width:103px;height:26px;background:#dedee3;border-radius:5px"></div>
<div style="position:absolute;left:11px;top:512px;width:212px;height:32px;background:#dedee3;border-radius:6px"></div>
<div style="position:absolute;left:43px;top:482px;font-family:'Liberation Sans',sans-serif;font-size:19px;color:#1a1a1a;white-space:nowrap;line-height:1;">静音</div>
<div style="position:absolute;left:151px;top:482px;font-family:'Liberation Sans',sans-serif;font-size:19px;color:#1a1a1a;white-space:nowrap;line-height:1;">独奏</div>
<div style="position:absolute;left:87px;top:517px;font-family:'Liberation Sans',sans-serif;font-size:19px;color:#1a1a1a;white-space:nowrap;line-height:1;">效果器</div>
<div style="position:absolute;left:19.5px;top:553px;width:7px;height:1.8px;background:#222;"></div>
<div style="position:absolute;left:204px;top:553.5px;width:8px;height:1.8px;background:#222;"></div>
<div style="position:absolute;left:207.2px;top:550.3px;width:1.8px;height:8px;background:#222;"></div>
<div style="position:absolute;left:20px;top:590px;font-family:'Liberation Sans',sans-serif;font-size:12.5px;color:#444;white-space:nowrap;line-height:1;font-weight:bold">左</div>
<div style="position:absolute;left:198px;top:590px;font-family:'Liberation Sans',sans-serif;font-size:12.5px;color:#444;white-space:nowrap;line-height:1;font-weight:bold">右</div>
<svg style="position:absolute;left:19.5px;top:559.7px;" width="200" height="12" viewBox="0 0 200 12"><rect x="0" y="8" width="197" height="3" fill="#c9d5e1"/><rect x="1.2" y="1" width="1.3" height="7" fill="#cfdae5"/><rect x="16.1" y="4" width="1.3" height="4" fill="#cfdae5"/><rect x="31.0" y="4" width="1.3" height="4" fill="#cfdae5"/><rect x="45.9" y="4" width="1.3" height="4" fill="#cfdae5"/><rect x="60.8" y="4" width="1.3" height="4" fill="#cfdae5"/><rect x="75.7" y="4" width="1.3" height="4" fill="#cfdae5"/><rect x="90.6" y="4" width="1.3" height="4" fill="#cfdae5"/><rect x="135.3" y="4" width="1.3" height="4" fill="#cfdae5"/><rect x="150.2" y="4" width="1.3" height="4" fill="#cfdae5"/><rect x="165.1" y="4" width="1.3" height="4" fill="#cfdae5"/><rect x="180.0" y="4" width="1.3" height="4" fill="#cfdae5"/><rect x="194.9" y="1" width="1.3" height="7" fill="#cfdae5"/></svg>
<svg style="position:absolute;left:107px;top:558.7px;" width="20" height="20" viewBox="0 0 20 20"><circle cx="10" cy="10" r="8.2" fill="#f6f6f6" stroke="#222" stroke-width="1.7"/></svg>
<svg style="position:absolute;left:19.5px;top:604.6px;" width="200" height="12" viewBox="0 0 200 12"><rect x="0" y="8" width="197" height="3" fill="#c9d5e1"/><rect x="1.2" y="1" width="1.3" height="7" fill="#cfdae5"/><rect x="16.1" y="4" width="1.3" height="4" fill="#cfdae5"/><rect x="31.0" y="4" width="1.3" height="4" fill="#cfdae5"/><rect x="45.9" y="4" width="1.3" height="4" fill="#cfdae5"/><rect x="60.8" y="4" width="1.3" height="4" fill="#cfdae5"/><rect x="75.7" y="4" width="1.3" height="4" fill="#cfdae5"/><rect x="90.6" y="4" width="1.3" height="4" fill="#cfdae5"/><rect x="135.3" y="4" width="1.3" height="4" fill="#cfdae5"/><rect x="150.2" y="4" width="1.3" height="4" fill="#cfdae5"/><rect x="165.1" y="4" width="1.3" height="4" fill="#cfdae5"/><rect x="180.0" y="4" width="1.3" height="4" fill="#cfdae5"/><rect x="194.9" y="1" width="1.3" height="7" fill="#cfdae5"/></svg>
<svg style="position:absolute;left:107px;top:603.6px;" width="20" height="20" viewBox="0 0 20 20"><circle cx="10" cy="10" r="8.2" fill="#f6f6f6" stroke="#222" stroke-width="1.7"/></svg>
<div style="position:absolute;left:231.3px;top:471px;width:67.5px;height:1px;background:#e8e8e8;"></div>
<div style="position:absolute;left:234.0px;top:472.7px;font-family:'Liberation Serif',serif;font-size:24.5px;color:#111;white-space:nowrap;line-height:1;width:49.0px;text-align:center;font-weight:bold;transform:scale(1.0,1.08);transform-origin:50% 12.7px;">1</div>
<div style="position:absolute;left:244.5px;top:472.7px;font-family:'Liberation Serif',serif;font-size:24.5px;color:#111;white-space:nowrap;line-height:1;width:49.0px;text-align:center;font-weight:bold;transform:scale(1.0,1.08);transform-origin:50% 12.7px;">.</div>
<div style="position:absolute;left:260.5px;top:472.7px;font-family:'Liberation Serif',serif;font-size:24.5px;color:#111;white-space:nowrap;line-height:1;width:49.0px;text-align:center;font-weight:bold;transform:scale(1.0,1.08);transform-origin:50% 12.7px;">0</div>
<div style="position:absolute;left:236.5px;top:506.8px;font-family:'Liberation Serif',serif;font-size:24.5px;color:#111;white-space:nowrap;line-height:1;width:49.0px;text-align:center;font-weight:normal;transform:scale(1.0,1.08);transform-origin:50% 12.7px;">0</div>
<div style="position:absolute;left:244.5px;top:506.8px;font-family:'Liberation Serif',serif;font-size:24.5px;color:#111;white-space:nowrap;line-height:1;width:49.0px;text-align:center;font-weight:normal;transform:scale(1.0,1.08);transform-origin:50% 12.7px;">.</div>
<div style="position:absolute;left:260.5px;top:506.8px;font-family:'Liberation Serif',serif;font-size:24.5px;color:#111;white-space:nowrap;line-height:1;width:49.0px;text-align:center;font-weight:normal;transform:scale(1.0,1.08);transform-origin:50% 12.7px;">5</div>
<div style="position:absolute;left:236.5px;top:555.3px;font-family:'Liberation Serif',serif;font-size:24.5px;color:#111;white-space:nowrap;line-height:1;width:49.0px;text-align:center;font-weight:bold;transform:scale(1.0,1.08);transform-origin:50% 12.7px;">0</div>
<div style="position:absolute;left:244.5px;top:555.3px;font-family:'Liberation Serif',serif;font-size:24.5px;color:#111;white-space:nowrap;line-height:1;width:49.0px;text-align:center;font-weight:bold;transform:scale(1.0,1.08);transform-origin:50% 12.7px;">.</div>
<div style="position:absolute;left:260.5px;top:555.3px;font-family:'Liberation Serif',serif;font-size:24.5px;color:#111;white-space:nowrap;line-height:1;width:49.0px;text-align:center;font-weight:bold;transform:scale(1.0,1.08);transform-origin:50% 12.7px;">0</div>
<div style="position:absolute;left:243.7px;top:613.8px;width:10px;height:2px;background:#111;"></div>
<div style="position:absolute;left:236.5px;top:602.1px;font-family:'Liberation Serif',serif;font-size:24.5px;color:#111;white-space:nowrap;line-height:1;width:49.0px;text-align:center;font-weight:normal;transform:scale(1.0,1.08);transform-origin:50% 12.7px;">0</div>
<div style="position:absolute;left:244.5px;top:602.1px;font-family:'Liberation Serif',serif;font-size:24.5px;color:#111;white-space:nowrap;line-height:1;width:49.0px;text-align:center;font-weight:normal;transform:scale(1.0,1.08);transform-origin:50% 12.7px;">.</div>
<div style="position:absolute;left:260.5px;top:602.1px;font-family:'Liberation Serif',serif;font-size:24.5px;color:#111;white-space:nowrap;line-height:1;width:49.0px;text-align:center;font-weight:normal;transform:scale(1.0,1.08);transform-origin:50% 12.7px;">5</div>
<div style="position:absolute;left:238.6px;top:648.2px;width:10px;height:2px;background:#111;"></div>
<div style="position:absolute;left:234.0px;top:636.5px;font-family:'Liberation Serif',serif;font-size:24.5px;color:#111;white-space:nowrap;line-height:1;width:49.0px;text-align:center;font-weight:bold;transform:scale(1.0,1.08);transform-origin:50% 12.7px;">1</div>
<div style="position:absolute;left:244.5px;top:636.5px;font-family:'Liberation Serif',serif;font-size:24.5px;color:#111;white-space:nowrap;line-height:1;width:49.0px;text-align:center;font-weight:bold;transform:scale(1.0,1.08);transform-origin:50% 12.7px;">.</div>
<div style="position:absolute;left:260.5px;top:636.5px;font-family:'Liberation Serif',serif;font-size:24.5px;color:#111;white-space:nowrap;line-height:1;width:49.0px;text-align:center;font-weight:bold;transform:scale(1.0,1.08);transform-origin:50% 12.7px;">0</div>
<div style="position:absolute;left:292px;top:566.5px;width:7px;height:2.5px;background:#111;"></div>
<div style="position:absolute;left:294.5px;top:519px;width:4.5px;height:1.5px;background:#111;"></div>
<div style="position:absolute;left:294.5px;top:614px;width:4.5px;height:1.5px;background:#111;"></div>
<div style="position:absolute;left:292px;top:659.5px;width:7px;height:2px;background:#111;"></div>
<div style="position:absolute;left:309px;top:452px;font-family:'Liberation Sans',sans-serif;font-size:18px;color:#1a1a1a;white-space:nowrap;line-height:1;">粒子艺术</div>
<svg style="position:absolute;left:1655px;top:455px;" width="30" height="12" viewBox="0 0 30 12"><g fill="#111"><path transform="translate(5.5,6.3)" d="M0 -3 L0.9 -0.9 L3 0 L0.9 0.9 L0 3 L-0.9 0.9 L-3 0 L-0.9 -0.9 Z"/><path transform="translate(14.6,6.3)" d="M0 -3 L0.9 -0.9 L3 0 L0.9 0.9 L0 3 L-0.9 0.9 L-3 0 L-0.9 -0.9 Z"/><path transform="translate(23.6,6.3)" d="M0 -3 L0.9 -0.9 L3 0 L0.9 0.9 L0 3 L-0.9 0.9 L-3 0 L-0.9 -0.9 Z"/></g></svg>
<div style="position:absolute;left:302px;top:566.8px;width:1394px;height:1.3px;background:#6766d3;"></div>
<svg style="position:absolute;left:0px;top:0px;pointer-events:none" width="1739" height="1049" viewBox="0 0 1739 1049"><path d="M309 567.5V549.6H310V552.6H311V547.1H312V546.6H313V549.6H314V550.7H315V552.6H316V559.3H317V557.9H318V557.5H319V558.7H320V560.6H321V550.3H322V542.9H323V545.4H324V551.6H325V555.2H326V560.3H327V555.5H328V558.2H329V558.5H330V562.2H331V563.2H332V548.4H333V555.6H334V549.2H335V548.4H336V550.6H337V556.4H338V558.2H339V559.5H340V561.2H341V562.1H342V559.4H343V560.3H344V562.3H345V561.0H346V562.0H347V564.8H348V563.7H349V564.2H350V565.1H351V564.4H352V564.9H353V565.4H354V565.5H355V565.5H356V565.3H357V535.5H358V543.5H359V554.9H360V553.3H361V554.5H362V548.3H363V549.7H364V554.9H365V560.9H366V557.8H367V558.2H368V559.4H369V550.2H370V551.1H371V547.7H372V547.6H373V558.0H374V551.1H375V554.1H376V557.8H377V555.8H378V560.7H379V561.0H380V543.9H381V554.1H382V552.1H383V560.1H384V561.1H385V553.8H386V552.4H387V557.0H388V541.2H389V546.3H390V557.5H391V535.9H392V535.5H393V528.2H394V517.9H395V528.9H396V528.1H397V523.0H398V531.7H399V525.1H400V527.5H401V529.5H402V543.1H403V542.9H404V535.6H405V520.5H406V525.2H407V522.4H408V521.8H409V523.2H410V506.5H411V529.1H412V521.8H413V522.7H414V520.3H415V527.5H416V540.3H417V528.9H418V515.2H419V515.9H420V521.0H421V526.1H422V539.4H423V529.0H424V539.3H425V531.1H426V532.0H427V539.2H428V539.2H429V519.7H430V520.7H431V513.6H432V508.8H433V501.7H434V520.3H435V506.0H436V520.3H437V530.6H438V536.4H439V529.9H440V517.3H441V522.6H442V527.8H443V538.6H444V511.3H445V523.7H446V527.4H447V524.0H448V500.4H449V502.1H450V501.4H451V501.7H452V521.1H453V524.8H454V511.4H455V505.2H456V501.4H457V507.3H458V513.7H459V515.0H460V500.0H461V511.5H462V518.3H463V505.5H464V524.9H465V503.9H466V507.2H467V533.6H468V521.1H469V525.4H470V514.6H471V514.3H472V516.0H473V515.3H474V500.8H475V519.3H476V532.9H477V512.7H478V522.5H479V522.3H480V532.7H481V523.5H482V518.1H483V523.4H484V525.4H485V511.4H486V500.2H487V515.8H488V524.5H489V536.7H490V532.0H491V502.5H492V502.6H493V523.8H494V529.8H495V511.4H496V499.2H497V502.9H498V499.4H499V507.5H500V535.1H501V530.0H502V520.0H503V502.8H504V510.0H505V502.6H506V511.5H507V506.6H508V520.1H509V514.9H510V513.3H511V515.5H512V533.4H513V532.6H514V520.5H515V501.4H516V515.7H517V513.6H518V531.5H519V502.5H520V507.5H521V535.2H522V535.2H523V529.2H524V535.1H525V535.1H526V514.2H527V527.3H528V514.6H529V508.4H530V526.7H531V519.2H532V534.6H533V514.6H534V532.7H535V527.5H536V526.1H537V525.0H538V528.1H539V534.4H540V525.3H541V527.9H542V512.3H543V515.5H544V516.2H545V506.5H546V503.9H547V521.7H548V525.5H549V530.0H550V515.3H551V526.0H552V511.0H553V522.5H554V504.7H555V520.1H556V518.4H557V511.6H558V512.3H559V520.6H560V514.0H561V516.2H562V514.6H563V517.4H564V515.4H565V529.1H566V515.9H567V521.7H568V521.3H569V516.2H570V515.8H571V507.1H572V516.9H573V512.9H574V506.4H575V505.4H576V522.8H577V518.2H578V520.6H579V521.8H580V529.3H581V528.5H582V531.8H583V518.5H584V517.5H585V515.9H586V529.8H587V515.5H588V511.7H589V526.8H590V512.4H591V522.7H592V526.4H593V519.6H594V512.2H595V511.3H596V505.5H597V509.3H598V515.1H599V520.5H600V524.1H601V521.9H602V528.5H603V531.0H604V531.0H605V530.2H606V510.9H607V521.3H608V530.2H609V519.6H610V522.8H611V530.6H612V512.0H613V520.3H614V523.3H615V528.7H616V529.4H617V513.3H618V524.5H619V523.2H620V527.8H621V530.0H622V519.0H623V508.8H624V513.1H625V516.7H626V520.0H627V524.5H628V521.1H629V524.9H630V517.6H631V523.9H632V512.6H633V516.9H634V509.3H635V513.4H636V519.5H637V524.0H638V513.5H639V516.6H640V518.2H641V506.2H642V510.6H643V522.5H644V523.1H645V522.6H646V522.2H647V514.9H648V519.2H649V526.9H650V514.7H651V517.5H652V522.2H653V528.2H654V517.4H655V505.5H656V516.2H657V516.5H658V521.0H659V509.5H660V523.6H661V527.7H662V521.7H663V511.5H664V507.8H665V509.0H666V507.8H667V504.4H668V514.6H669V520.4H670V510.8H671V513.2H672V517.6H673V514.6H674V511.4H675V516.6H676V511.0H677V514.4H678V513.1H679V508.0H680V507.5H681V512.0H682V498.9H683V504.1H684V516.3H685V511.1H686V516.8H687V505.3H688V508.0H689V518.2H690V513.7H691V508.6H692V491.8H693V498.6H694V494.2H695V501.7H696V504.2H697V498.2H698V487.7H699V515.8H700V514.3H701V513.3H702V499.2H703V499.7H704V481.4H705V497.1H706V493.3H707V483.8H708V499.1H709V515.5H710V515.5H711V510.7H712V496.1H713V508.3H714V515.5H715V515.5H716V489.1H717V488.7H718V482.9H719V476.9H720V476.8H721V481.6H722V502.9H723V494.9H724V507.1H725V496.0H726V484.9H727V514.8H728V489.1H729V491.4H730V484.0H731V495.6H732V492.8H733V513.4H734V508.8H735V503.2H736V509.9H737V509.7H738V503.2H739V501.7H740V494.9H741V489.8H742V510.8H743V514.8H744V495.9H745V499.2H746V506.0H747V497.6H748V508.1H749V499.6H750V508.2H751V495.8H752V500.8H753V498.4H754V506.3H755V493.6H756V491.7H757V484.5H758V496.8H759V500.8H760V492.1H761V494.8H762V500.1H763V517.3H764V524.9H765V527.5H766V524.0H767V520.9H768V524.6H769V526.2H770V522.8H771V521.1H772V519.1H773V475.0H774V474.0H775V473.5H776V475.0H777V474.5H778V473.5H779V474.5H780V473.5H781V474.0H782V475.5H783V475.0H784V475.0H785V474.5H786V473.5H787V474.5H788V475.5H789V474.5H790V473.5H791V473.5H792V476.5H793V473.5H794V473.5H795V475.5H796V476.5H797V475.0H798V474.5H799V475.5H800V473.5H801V474.5H802V473.5H803V474.5H804V474.5H805V474.5H806V473.5H807V473.5H808V473.5H809V473.5H810V473.5H811V474.5H812V476.5H813V473.5H814V475.0H815V476.5H816V474.0H817V473.5H818V473.5H819V474.5H820V475.0H821V473.5H822V476.5H823V474.5H824V475.0H825V475.5H826V475.5H827V474.5H828V473.5H829V475.5H830V474.5H831V474.0H832V476.5H833V474.5H834V474.0H835V473.5H836V473.5H837V475.5H838V475.0H839V473.5H840V473.5H841V476.5H842V473.5H843V475.5H844V474.5H845V473.5H846V473.5H847V473.5H848V474.5H849V473.5H850V473.5H851V474.0H852V475.5H853V474.0H854V474.0H855V474.5H856V475.5H857V474.5H858V473.5H859V473.5H860V473.5H861V474.5H862V474.5H863V475.0H864V474.5H865V474.5H866V474.5H867V475.0H868V474.5H869V474.0H870V473.5H871V474.5H872V476.5H873V473.5H874V474.5H875V474.0H876V476.5H877V474.5H878V476.5H879V475.0H880V474.0H881V474.5H882V474.5H883V473.5H884V476.5H885V473.5H886V473.5H887V473.5H888V475.5H889V473.5H890V475.5H891V475.0H892V475.5H893V476.5H894V473.5H895V476.5H896V475.0H897V475.0H898V474.0H899V473.5H900V476.5H901V476.5H902V476.5H903V473.5H904V474.5H905V475.5H906V473.5H907V476.5H908V476.5H909V475.0H910V474.5H911V474.5H912V475.0H913V473.5H914V474.5H915V473.5H916V474.5H917V474.0H918V474.5H919V475.5H920V473.5H921V473.5H922V474.5H923V474.5H924V475.5H925V474.5H926V475.5H927V473.5H928V475.0H929V474.5H930V475.5H931V474.0H932V476.5H933V473.5H934V474.0H935V475.5H936V473.5H937V475.0H938V473.5H939V473.5H940V474.5H941V473.5H942V475.5H943V474.5H944V531.5H945V531.5H946V524.9H947V523.7H948V531.0H949V528.3H950V519.6H951V520.5H952V520.2H953V473.5H954V473.5H955V474.0H956V474.0H957V475.0H958V473.5H959V475.0H960V473.5H961V474.0H962V473.5H963V475.5H964V473.5H965V473.5H966V475.5H967V475.0H968V473.5H969V473.5H970V475.5H971V475.0H972V474.0H973V473.5H974V473.5H975V473.5H976V474.5H977V473.5H978V506.0H979V504.2H980V497.1H981V498.7H982V500.4H983V502.7H984V498.9H985V501.2H986V499.8H987V498.8H988V499.7H989V500.6H990V499.9H991V510.7H992V499.7H993V490.8H994V482.4H995V473.5H996V474.5H997V473.5H998V473.5H999V474.5H1000V476.5H1001V475.0H1002V473.5H1003V473.5H1004V474.5H1005V474.5H1006V473.5H1007V475.5H1008V475.0H1009V473.5H1010V473.5H1011V474.5H1012V473.5H1013V474.0H1014V473.5H1015V473.5H1016V473.5H1017V475.5H1018V535.2H1019V537.3H1020V538.9H1021V536.9H1022V537.9H1023V484.7H1024V486.2H1025V482.0H1026V486.5H1027V487.5H1028V484.8H1029V484.8H1030V487.5H1031V485.5H1032V487.1H1033V486.7H1034V488.6H1035V489.5H1036V486.9H1037V481.5H1038V488.7H1039V523.1H1040V506.7H1041V489.5H1042V473.5H1043V473.5H1044V474.0H1045V473.5H1046V474.5H1047V473.5H1048V475.5H1049V473.5H1050V476.5H1051V474.5H1052V476.5H1053V476.5H1054V476.5H1055V473.5H1056V474.0H1057V474.5H1058V475.5H1059V473.5H1060V474.5H1061V475.5H1062V473.5H1063V475.0H1064V473.5H1065V474.0H1066V476.5H1067V476.5H1068V475.5H1069V490.9H1070V486.8H1071V479.0H1072V473.5H1073V474.5H1074V474.5H1075V473.5H1076V475.0H1077V476.5H1078V475.5H1079V473.5H1080V476.5H1081V473.5H1082V474.0H1083V475.0H1084V473.5H1085V475.5H1086V473.5H1087V474.5H1088V473.5H1089V474.5H1090V475.5H1091V474.0H1092V476.5H1093V475.5H1094V473.5H1095V473.5H1096V474.5H1097V473.5H1098V473.5H1099V475.0H1100V473.5H1101V476.5H1102V473.5H1103V473.5H1104V473.5H1105V474.5H1106V474.5H1107V474.5H1108V474.5H1109V476.5H1110V473.5H1111V545.1H1112V543.7H1113V545.5H1114V545.5H1115V543.7H1116V541.0H1117V542.5H1118V542.9H1119V536.2H1120V541.3H1121V536.6H1122V534.3H1123V531.1H1124V539.4H1125V529.7H1126V517.6H1127V526.4H1128V533.0H1129V539.5H1130V525.7H1131V473.5H1132V474.0H1133V475.5H1134V474.5H1135V474.0H1136V474.0H1137V473.5H1138V473.5H1139V473.5H1140V475.0H1141V474.0H1142V475.0H1143V475.0H1144V473.5H1145V474.0H1146V474.5H1147V476.5H1148V475.0H1149V473.5H1150V473.5H1151V476.5H1152V473.5H1153V475.5H1154V475.0H1155V474.0H1156V473.5H1157V476.5H1158V473.5H1159V473.5H1160V473.5H1161V475.5H1162V475.5H1163V473.5H1164V473.5H1165V475.5H1166V473.5H1167V475.5H1168V473.5H1169V474.5H1170V473.5H1171V473.5H1172V474.0H1173V473.5H1174V473.5H1175V476.5H1176V474.5H1177V474.5H1178V476.5H1179V475.5H1180V474.0H1181V474.0H1182V473.5H1183V473.5H1184V475.0H1185V474.5H1186V475.5H1187V475.5H1188V475.5H1189V476.5H1190V474.0H1191V474.5H1192V474.5H1193V474.5H1194V475.5H1195V474.5H1196V476.5H1197V475.5H1198V473.5H1199V473.5H1200V474.0H1201V474.5H1202V476.5H1203V473.5H1204V474.5H1205V474.5H1206V473.5H1207V475.0H1208V474.5H1209V476.5H1210V476.5H1211V473.5H1212V473.5H1213V476.5H1214V475.0H1215V474.0H1216V474.5H1217V475.5H1218V475.5H1219V474.5H1220V473.5H1221V473.5H1222V473.5H1223V473.5H1224V475.0H1225V473.5H1226V475.0H1227V473.5H1228V473.5H1229V475.5H1230V474.5H1231V475.0H1232V475.0H1233V473.5H1234V475.5H1235V473.5H1236V473.5H1237V474.5H1238V476.5H1239V474.5H1240V473.5H1241V475.0H1242V474.0H1243V474.5H1244V474.5H1245V473.5H1246V474.0H1247V473.5H1248V473.5H1249V473.5H1250V473.5H1251V474.0H1252V475.5H1253V474.5H1254V473.5H1255V473.5H1256V474.5H1257V474.5H1258V474.5H1259V473.5H1260V473.5H1261V475.5H1262V473.5H1263V476.5H1264V473.5H1265V474.5H1266V475.0H1267V473.5H1268V474.5H1269V525.2H1270V521.1H1271V518.2H1272V515.8H1273V518.9H1274V509.3H1275V508.7H1276V510.5H1277V516.8H1278V518.0H1279V515.6H1280V502.1H1281V523.3H1282V502.1H1283V510.5H1284V511.6H1285V522.2H1286V531.7H1287V524.8H1288V523.4H1289V531.0H1290V529.0H1291V531.9H1292V534.5H1293V535.8H1294V531.2H1295V534.8H1296V531.9H1297V531.0H1298V533.5H1299V524.1H1300V527.9H1301V530.5H1302V531.6H1303V531.1H1304V531.7H1305V532.8H1306V533.7H1307V538.0H1308V541.9H1309V534.0H1310V530.9H1311V536.1H1312V526.1H1313V530.9H1314V534.0H1315V540.5H1316V540.9H1317V532.2H1318V536.4H1319V540.6H1320V532.3H1321V528.6H1322V526.3H1323V530.3H1324V523.3H1325V532.2H1326V527.4H1327V526.0H1328V530.7H1329V531.0H1330V527.2H1331V533.4H1332V541.9H1333V537.1H1334V538.9H1335V539.7H1336V536.2H1337V532.8H1338V533.4H1339V538.9H1340V539.4H1341V538.2H1342V537.4H1343V531.4H1344V537.8H1345V543.3H1346V538.3H1347V542.5H1348V541.3H1349V535.7H1350V542.6H1351V545.2H1352V537.8H1353V543.4H1354V538.2H1355V543.3H1356V541.9H1357V543.8H1358V547.5H1359V535.1H1360V536.2H1361V547.3H1362V543.3H1363V546.9H1364V537.1H1365V538.7H1366V540.9H1367V537.4H1368V541.8H1369V541.7H1370V541.2H1371V540.3H1372V540.0H1373V544.9H1374V541.4H1375V547.9H1376V543.1H1377V540.3H1378V544.5H1379V543.2H1380V537.5H1381V540.9H1382V540.6H1383V545.6H1384V547.9H1385V543.4H1386V544.1H1387V543.3H1388V544.7H1389V541.6H1390V538.9H1391V542.2H1392V540.9H1393V540.7H1394V542.8H1395V550.3H1396V549.3H1397V548.7H1398V548.7H1399V544.9H1400V542.9H1401V548.8H1402V549.3H1403V551.9H1404V550.8H1405V554.8H1406V549.3H1407V545.5H1408V548.5H1409V553.7H1410V554.2H1411V553.8H1412V551.5H1413V548.1H1414V547.5H1415V551.2H1416V550.9H1417V558.6H1418V557.1H1419V553.4H1420V547.5H1421V547.8H1422V555.4H1423V563.0H1424V557.9H1425V553.0H1426V555.5H1427V556.3H1428V557.7H1429V558.3H1430V549.9H1431V555.6H1432V555.8H1433V554.0H1434V556.1H1435V556.0H1436V560.8H1437V558.3H1438V556.0H1439V558.3H1440V561.4H1441V556.4H1442V557.0H1443V552.6H1444V550.4H1445V558.4H1446V557.4H1447V550.0H1448V556.2H1449V555.4H1450V550.4H1451V556.2H1452V560.5H1453V554.6H1454V554.5H1455V559.5H1456V555.8H1457V562.0H1458V554.9H1459V555.9H1460V555.8H1461V556.1H1462V553.6H1463V561.6H1464V557.8H1465V553.3H1466V556.6H1467V552.8H1468V558.8H1469V558.7H1470V561.0H1471V559.5H1472V552.3H1473V553.3H1474V557.7H1475V556.6H1476V554.8H1477V554.8H1478V545.8H1479V551.3H1480V548.9H1481V548.3H1482V557.2H1483V552.7H1484V552.3H1485V545.0H1486V551.8H1487V560.0H1488V567.5V571.2H1487V570.1H1486V570.5H1485V579.1H1484V580.0H1483V576.9H1482V582.1H1481V578.2H1480V579.9H1479V584.9H1478V581.3H1477V586.4H1476V585.9H1475V583.0H1474V583.4H1473V589.3H1472V581.6H1471V577.0H1470V577.0H1469V583.6H1468V583.9H1467V588.4H1466V584.2H1465V582.0H1464V578.8H1463V585.8H1462V580.5H1461V582.6H1460V584.2H1459V585.7H1458V579.4H1457V584.5H1456V585.6H1455V585.9H1454V580.9H1453V580.3H1452V584.7H1451V577.4H1450V578.6H1449V578.6H1448V582.3H1447V578.5H1446V573.8H1445V573.3H1444V581.3H1443V579.5H1442V577.8H1441V577.0H1440V580.4H1439V581.6H1438V577.0H1437V578.8H1436V577.0H1435V575.2H1434V577.2H1433V577.9H1432V578.8H1431V580.0H1430V584.3H1429V580.1H1428V576.6H1427V579.1H1426V572.8H1425V578.4H1424V579.4H1423V579.4H1422V581.0H1421V583.5H1420V583.1H1419V588.4H1418V588.7H1417V587.6H1416V581.0H1415V577.4H1414V577.9H1413V583.2H1412V589.4H1411V590.6H1410V594.0H1409V586.9H1408V589.9H1407V592.7H1406V589.5H1405V590.0H1404V586.3H1403V587.8H1402V587.9H1401V591.3H1400V588.8H1399V585.7H1398V584.6H1397V587.3H1396V587.4H1395V585.0H1394V592.0H1393V591.8H1392V589.7H1391V591.1H1390V596.9H1389V593.8H1388V593.6H1387V596.5H1386V588.3H1385V590.8H1384V593.5H1383V585.4H1382V583.1H1381V587.0H1380V587.2H1379V585.6H1378V586.3H1377V588.8H1376V587.2H1375V590.2H1374V593.1H1373V587.3H1372V590.4H1371V591.0H1370V591.6H1369V593.6H1368V591.3H1367V588.3H1366V598.6H1365V591.7H1364V591.5H1363V590.1H1362V587.9H1361V593.0H1360V592.4H1359V597.8H1358V597.0H1357V593.9H1356V591.0H1355V590.7H1354V597.6H1353V592.9H1352V589.9H1351V590.5H1350V591.4H1349V595.9H1348V595.7H1347V594.2H1346V602.7H1345V598.9H1344V598.8H1343V598.3H1342V598.4H1341V602.6H1340V602.3H1339V604.4H1338V600.1H1337V601.3H1336V600.1H1335V602.5H1334V601.5H1333V595.8H1332V603.7H1331V592.7H1330V596.7H1329V595.2H1328V598.5H1327V596.4H1326V603.6H1325V604.1H1324V595.2H1323V594.9H1322V599.3H1321V602.4H1320V602.9H1319V600.1H1318V602.3H1317V601.6H1316V602.7H1315V609.2H1314V606.1H1313V607.7H1312V609.8H1311V609.0H1310V595.7H1309V606.3H1308V605.4H1307V598.1H1306V596.0H1305V597.4H1304V612.3H1303V605.2H1302V607.0H1301V621.6H1300V614.2H1299V612.8H1298V613.8H1297V614.3H1296V623.8H1295V605.0H1294V614.7H1293V607.0H1292V611.4H1291V612.9H1290V613.7H1289V618.3H1288V616.0H1287V622.4H1286V629.5H1285V621.8H1284V617.3H1283V625.5H1282V614.3H1281V632.0H1280V627.3H1279V634.2H1278V612.9H1277V617.5H1276V616.4H1275V612.2H1274V622.6H1273V613.5H1272V616.8H1271V609.6H1270V605.3H1269V655.5H1268V657.5H1267V658.0H1266V657.0H1265V658.0H1264V658.5H1263V657.5H1262V658.5H1261V658.5H1260V656.5H1259V657.5H1258V655.5H1257V655.5H1256V658.5H1255V657.5H1254V656.5H1253V657.0H1252V658.5H1251V658.5H1250V658.5H1249V656.5H1248V658.5H1247V658.5H1246V655.5H1245V658.5H1244V657.0H1243V657.5H1242V656.5H1241V658.0H1240V657.5H1239V655.5H1238V657.0H1237V658.5H1236V658.5H1235V658.5H1234V657.5H1233V658.5H1232V658.5H1231V655.5H1230V655.5H1229V657.0H1228V658.5H1227V658.0H1226V657.5H1225V655.5H1224V657.5H1223V656.5H1222V658.5H1221V658.0H1220V657.5H1219V658.5H1218V657.5H1217V658.5H1216V657.0H1215V657.5H1214V657.5H1213V657.0H1212V658.0H1211V658.5H1210V658.0H1209V657.5H1208V655.5H1207V656.5H1206V658.0H1205V658.5H1204V657.0H1203V657.5H1202V658.0H1201V656.5H1200V658.5H1199V656.5H1198V657.5H1197V656.5H1196V655.5H1195V658.0H1194V658.0H1193V658.5H1192V655.5H1191V658.5H1190V658.5H1189V655.5H1188V657.0H1187V657.0H1186V655.5H1185V657.0H1184V658.5H1183V657.0H1182V657.5H1181V658.5H1180V657.0H1179V655.5H1178V658.5H1177V656.5H1176V658.5H1175V657.5H1174V655.5H1173V655.5H1172V657.0H1171V655.5H1170V658.5H1169V657.5H1168V655.5H1167V658.5H1166V658.5H1165V657.5H1164V658.5H1163V657.5H1162V658.5H1161V658.5H1160V658.5H1159V657.5H1158V658.5H1157V658.5H1156V655.5H1155V656.5H1154V657.0H1153V658.5H1152V658.5H1151V657.5H1150V658.5H1149V658.5H1148V655.5H1147V658.0H1146V657.5H1145V655.5H1144V658.5H1143V658.5H1142V655.5H1141V657.5H1140V658.0H1139V657.5H1138V658.5H1137V658.5H1136V655.5H1135V658.0H1134V656.5H1133V658.5H1132V657.0H1131V615.0H1130V614.5H1129V617.0H1128V619.7H1127V627.8H1126V618.8H1125V610.3H1124V607.4H1123V610.4H1122V598.8H1121V601.4H1120V595.0H1119V593.4H1118V592.7H1117V592.6H1116V593.2H1115V593.1H1114V592.8H1113V591.3H1112V586.2H1111V658.0H1110V657.0H1109V657.5H1108V658.0H1107V658.5H1106V658.5H1105V657.0H1104V658.0H1103V655.5H1102V658.5H1101V657.5H1100V657.5H1099V655.5H1098V658.0H1097V657.0H1096V658.5H1095V657.5H1094V655.5H1093V658.0H1092V657.5H1091V657.5H1090V658.5H1089V655.5H1088V657.5H1087V658.0H1086V656.5H1085V658.5H1084V658.5H1083V657.5H1082V658.5H1081V658.5H1080V658.5H1079V657.5H1078V658.5H1077V656.5H1076V657.0H1075V658.5H1074V656.5H1073V656.5H1072V652.1H1071V643.8H1070V636.3H1069V657.5H1068V656.5H1067V656.5H1066V658.5H1065V658.5H1064V657.0H1063V656.5H1062V658.5H1061V658.5H1060V657.0H1059V656.5H1058V657.5H1057V658.5H1056V658.5H1055V658.5H1054V657.5H1053V656.5H1052V657.5H1051V656.5H1050V657.0H1049V656.5H1048V656.5H1047V657.5H1046V658.0H1045V656.5H1044V657.5H1043V655.5H1042V640.9H1041V622.0H1040V598.7H1039V646.8H1038V648.9H1037V650.6H1036V650.9H1035V647.7H1034V646.8H1033V646.0H1032V648.6H1031V650.4H1030V648.5H1029V645.7H1028V650.3H1027V648.5H1026V647.2H1025V647.8H1024V648.4H1023V594.7H1022V595.2H1021V595.0H1020V594.5H1019V592.8H1018V656.5H1017V655.5H1016V658.5H1015V657.5H1014V658.5H1013V656.5H1012V658.5H1011V658.5H1010V658.0H1009V655.5H1008V658.0H1007V658.5H1006V657.0H1005V658.5H1004V657.5H1003V656.5H1002V656.5H1001V658.5H1000V657.5H999V658.0H998V658.0H997V658.0H996V656.5H995V651.0H994V641.4H993V633.3H992V622.6H991V657.5H990V657.5H989V657.0H988V658.5H987V658.5H986V658.5H985V658.5H984V658.5H983V656.5H982V658.5H981V658.0H980V644.1H979V630.5H978V658.5H977V656.5H976V658.0H975V657.5H974V657.5H973V657.5H972V657.5H971V657.5H970V657.5H969V656.5H968V658.5H967V658.0H966V658.5H965V658.5H964V658.5H963V658.5H962V658.5H961V657.5H960V657.5H959V657.0H958V658.5H957V655.5H956V658.5H955V657.5H954V657.5H953V602.6H952V598.5H951V597.5H950V594.3H949V597.1H948V599.8H947V602.4H946V601.8H945V597.3H944V658.5H943V655.5H942V658.5H941V657.0H940V658.5H939V657.0H938V657.0H937V657.5H936V658.5H935V658.0H934V658.5H933V658.5H932V658.0H931V657.5H930V658.0H929V657.5H928V658.5H927V658.0H926V658.5H925V658.5H924V658.5H923V658.5H922V658.5H921V658.5H920V657.5H919V655.5H918V658.5H917V657.0H916V658.0H915V657.5H914V656.5H913V657.5H912V657.0H911V657.0H910V657.5H909V658.0H908V657.5H907V658.5H906V657.5H905V658.0H904V657.5H903V655.5H902V658.5H901V657.5H900V658.5H899V658.0H898V655.5H897V658.0H896V658.5H895V658.5H894V657.5H893V656.5H892V658.5H891V658.5H890V657.0H889V658.5H888V658.0H887V658.5H886V657.5H885V655.5H884V657.5H883V658.5H882V657.5H881V657.0H880V657.5H879V657.0H878V657.5H877V657.0H876V657.5H875V657.0H874V657.5H873V658.0H872V658.5H871V657.5H870V658.5H869V656.5H868V657.5H867V656.5H866V658.5H865V658.0H864V657.5H863V658.5H862V657.5H861V657.5H860V655.5H859V656.5H858V658.5H857V658.0H856V657.5H855V655.5H854V656.5H853V655.5H852V658.5H851V657.0H850V658.0H849V657.0H848V658.5H847V657.5H846V655.5H845V657.5H844V657.5H843V657.0H842V655.5H841V658.5H840V655.5H839V658.0H838V657.5H837V658.0H836V658.5H835V656.5H834V658.5H833V658.5H832V657.5H831V655.5H830V657.5H829V658.5H828V658.5H827V658.5H826V657.0H825V657.5H824V656.5H823V657.5H822V658.0H821V657.0H820V655.5H819V658.5H818V657.0H817V655.5H816V657.0H815V656.5H814V658.5H813V658.5H812V656.5H811V658.0H810V657.5H809V657.5H808V657.5H807V658.5H806V657.0H805V657.5H804V658.5H803V658.5H802V655.5H801V655.5H800V655.5H799V658.5H798V658.0H797V658.0H796V656.5H795V655.5H794V658.5H793V658.5H792V657.5H791V658.5H790V657.0H789V657.5H788V658.5H787V657.5H786V658.5H785V658.5H784V657.0H783V655.5H782V657.0H781V657.5H780V655.5H779V655.5H778V658.5H777V658.5H776V658.5H775V658.5H774V658.5H773V613.5H772V613.3H771V606.4H770V602.7H769V607.1H768V605.4H767V606.9H766V612.7H765V604.5H764V614.4H763V619.6H762V632.3H761V631.9H760V624.6H759V617.5H758V626.8H757V626.4H756V653.7H755V648.8H754V641.5H753V652.1H752V647.5H751V625.5H750V648.6H749V635.8H748V619.8H747V623.8H746V631.6H745V617.5H744V617.5H743V627.9H742V621.6H741V618.7H740V626.1H739V636.7H738V634.6H737V618.1H736V617.5H735V631.3H734V644.6H733V641.0H732V637.9H731V637.1H730V652.3H729V634.0H728V625.7H727V631.8H726V617.5H725V622.3H724V649.7H723V647.9H722V640.7H721V621.8H720V629.2H719V636.5H718V631.0H717V635.0H716V639.9H715V654.2H714V647.3H713V644.9H712V639.4H711V625.7H710V625.5H709V624.9H708V628.5H707V635.0H706V617.5H705V627.6H704V636.8H703V626.0H702V654.8H701V630.1H700V630.6H699V638.6H698V638.2H697V651.2H696V623.5H695V638.3H694V630.6H693V624.8H692V630.3H691V623.6H690V637.4H689V640.0H688V637.6H687V640.8H686V621.9H685V624.0H684V622.3H683V626.4H682V614.6H681V616.0H680V624.5H679V626.9H678V635.8H677V632.3H676V628.2H675V628.5H674V633.7H673V618.5H672V614.4H671V630.1H670V627.7H669V617.1H668V624.7H667V610.9H666V622.4H665V619.9H664V622.8H663V622.1H662V611.6H661V618.3H660V625.7H659V612.0H658V612.0H657V617.2H656V619.4H655V627.2H654V621.7H653V619.8H652V617.0H651V618.0H650V614.8H649V617.3H648V622.2H647V620.2H646V616.9H645V617.3H644V612.7H643V611.4H642V625.7H641V621.8H640V622.4H639V620.5H638V614.3H637V610.8H636V618.7H635V609.9H634V614.0H633V610.2H632V608.5H631V621.0H630V615.0H629V615.7H628V621.7H627V623.5H626V620.0H625V626.9H624V612.3H623V612.9H622V612.6H621V615.4H620V611.1H619V608.2H618V608.7H617V624.6H616V630.1H615V623.5H614V623.6H613V620.3H612V610.2H611V614.8H610V628.3H609V625.8H608V616.3H607V622.3H606V626.8H605V629.4H604V627.7H603V629.8H602V614.0H601V620.0H600V628.5H599V630.2H598V607.6H597V613.7H596V616.0H595V615.0H594V615.0H593V615.3H592V608.8H591V614.0H590V614.9H589V610.4H588V618.6H587V628.7H586V611.7H585V617.6H584V619.7H583V614.0H582V626.4H581V628.4H580V631.5H579V621.1H578V623.1H577V610.3H576V611.8H575V625.6H574V627.3H573V627.6H572V619.9H571V610.8H570V606.0H569V611.0H568V620.4H567V606.6H566V628.4H565V619.2H564V607.2H563V629.8H562V621.0H561V619.0H560V622.1H559V613.9H558V605.4H557V605.3H556V605.3H555V612.2H554V620.9H553V617.8H552V613.2H551V618.0H550V620.7H549V608.6H548V623.4H547V604.9H546V614.7H545V607.1H544V611.8H543V625.1H542V606.0H541V612.3H540V604.6H539V609.4H538V612.3H537V610.2H536V614.6H535V620.5H534V629.0H533V630.8H532V606.7H531V620.8H530V632.9H529V618.5H528V629.8H527V622.4H526V610.9H525V612.4H524V603.9H523V611.7H522V629.5H521V626.0H520V611.3H519V617.0H518V621.6H517V609.1H516V618.9H515V603.7H514V609.9H513V630.0H512V630.4H511V629.9H510V623.2H509V627.1H508V603.1H507V605.5H506V603.1H505V622.1H504V608.8H503V607.1H502V602.9H501V607.9H500V613.2H499V627.0H498V620.1H497V624.5H496V626.9H495V602.9H494V619.7H493V621.9H492V616.4H491V619.5H490V620.5H489V620.5H488V609.0H487V625.8H486V616.6H485V621.6H484V605.9H483V609.1H482V613.7H481V618.0H480V617.4H479V615.8H478V608.1H477V618.7H476V616.0H475V625.3H474V607.6H473V614.9H472V605.6H471V609.8H470V621.1H469V628.7H468V628.2H467V606.4H466V601.1H465V601.0H464V600.9H463V613.1H462V624.6H461V635.1H460V635.1H459V620.9H458V617.5H457V605.9H456V605.2H455V627.1H454V624.3H453V614.5H452V605.6H451V617.5H450V625.6H449V614.4H448V621.5H447V617.6H446V620.5H445V599.4H444V611.3H443V600.5H442V599.2H441V612.0H440V614.9H439V619.5H438V601.5H437V626.0H436V608.5H435V598.6H434V614.4H433V621.4H432V618.1H431V632.0H430V626.6H429V622.6H428V613.8H427V614.1H426V620.8H425V629.8H424V629.5H423V618.0H422V618.3H421V608.9H420V613.7H419V618.6H418V609.5H417V603.2H416V605.6H415V609.0H414V605.7H413V604.8H412V594.8H411V620.5H410V621.4H409V600.2H408V603.4H407V623.2H406V604.8H405V607.3H404V620.9H403V616.9H402V610.2H401V595.8H400V592.8H399V607.8H398V602.8H397V594.2H396V598.6H395V603.1H394V596.4H393V594.7H392V594.8H391V583.1H390V578.9H389V578.8H388V592.9H387V589.0H386V579.4H385V574.6H384V579.8H383V581.4H382V584.2H381V582.5H380V574.5H379V576.1H378V578.7H377V577.2H376V576.1H375V579.0H374V579.7H373V574.8H372V585.8H371V582.5H370V593.8H369V577.2H368V571.7H367V577.1H366V572.5H365V575.5H364V574.9H363V575.3H362V578.8H361V587.8H360V587.9H359V587.7H358V586.4H357V569.5H356V569.5H355V569.9H354V570.0H353V569.5H352V570.2H351V571.0H350V571.2H349V571.8H348V570.1H347V570.7H346V571.5H345V571.8H344V570.9H343V574.7H342V577.1H341V577.3H340V573.8H339V578.0H338V580.0H337V576.4H336V584.4H335V582.2H334V587.0H333V583.4H332V576.2H331V577.2H330V575.2H329V577.7H328V580.7H327V581.6H326V576.1H325V586.0H324V579.0H323V586.3H322V593.9H321V574.3H320V577.1H319V574.1H318V574.3H317V578.1H316V580.9H315V585.3H314V580.2H313V587.7H312V577.6H311V591.6H310V593.4H309Z" fill="#6766d3"/></svg>
<div style="position:absolute;left:1487px;top:566.5px;width:7px;height:2px;background:#222;"></div>
<div style="position:absolute;left:0px;top:894px;width:1718px;height:1.5px;background:#fafafa;"></div>
<div style="position:absolute;left:0px;top:895.5px;width:1739px;height:24.5px;background:#f0f0f0;"></div>
<div style="position:absolute;left:309px;top:906.5px;width:1116px;height:3.2px;background:#838383;border-radius:1px"></div>
<div style="position:absolute;left:0px;top:920px;width:1739px;height:96px;background:#f8f8f8;"></div>
<div style="position:absolute;left:0px;top:1016px;width:1739px;height:2px;background:#e2e2e2;"></div>
<div style="position:absolute;left:0px;top:1018px;width:1739px;height:31px;background:#f0f0f0;"></div>
<div style="position:absolute;left:11px;top:1020px;width:1.3px;height:29px;background:#d6d6d6;"></div>
<div style="position:absolute;left:275px;top:1020px;width:1.3px;height:29px;background:#d6d6d6;"></div>
<div style="position:absolute;left:1476px;top:1020px;width:1.3px;height:29px;background:#d6d6d6;"></div>
<div style="position:absolute;left:19px;top:1030px;font-family:'Liberation Sans',sans-serif;font-size:17px;color:#1a1a1a;white-space:nowrap;line-height:1;">已停止.</div>
<svg style="position:absolute;left:1.3px;top:957.3px;" width="12" height="20" viewBox="0 0 12 20"><rect x="0.0" y="0.0" width="3" height="3" fill="#7c7f91"/><rect x="0.0" y="7.6" width="3" height="3" fill="#7c7f91"/><rect x="0.0" y="15.2" width="3" height="3" fill="#7c7f91"/><rect x="7.6" y="0.0" width="3" height="3" fill="#7c7f91"/><rect x="7.6" y="7.6" width="3" height="3" fill="#7c7f91"/><rect x="7.6" y="15.2" width="3" height="3" fill="#7c7f91"/></svg>
<div style="position:absolute;left:22px;top:936.5px;font-family:'Liberation Sans',sans-serif;font-size:18px;color:#1a1a1a;white-space:nowrap;line-height:1;">速度</div>
<div style="position:absolute;left:121px;top:936.5px;font-family:'Liberation Sans',sans-serif;font-size:18px;color:#1a1a1a;white-space:nowrap;line-height:1;">拍号</div>
<div style="position:absolute;left:24px;top:963px;width:61px;height:36px;background:#fff;border:1px solid #e2e2e2;border-bottom:1.5px solid #8a8a8a;box-sizing:border-box;border-radius:3px"></div>
<div style="position:absolute;left:89.5px;top:964.5px;width:20px;height:14px;background:#fafafa;border:1px solid #dadada;box-sizing:border-box;border-radius:2px"></div>
<div style="position:absolute;left:89.5px;top:982.5px;width:20px;height:14px;background:#fafafa;border:1px solid #dadada;box-sizing:border-box;border-radius:2px"></div>
<svg style="position:absolute;left:89.5px;top:964.5px;" width="20" height="32" viewBox="0 0 20 32"><path d="M6 10 L14 10 L10 5.5 Z M6 22 L14 22 L10 26.5 Z" fill="#111"/></svg>
<div style="position:absolute;left:31px;top:970.2px;font-family:'Liberation Sans',sans-serif;font-size:18px;color:#111;white-space:nowrap;line-height:1;">120</div>
<div style="position:absolute;left:123px;top:963px;width:46.5px;height:36px;background:#fff;border:1px solid #e2e2e2;border-bottom:1.5px solid #8a8a8a;box-sizing:border-box;border-radius:3px"></div>
<div style="position:absolute;left:173.5px;top:964.5px;width:20px;height:14px;background:#fafafa;border:1px solid #dadada;box-sizing:border-box;border-radius:2px"></div>
<div style="position:absolute;left:173.5px;top:982.5px;width:20px;height:14px;background:#fafafa;border:1px solid #dadada;box-sizing:border-box;border-radius:2px"></div>
<svg style="position:absolute;left:173.5px;top:964.5px;" width="20" height="32" viewBox="0 0 20 32"><path d="M6 10 L14 10 L10 5.5 Z M6 22 L14 22 L10 26.5 Z" fill="#111"/></svg>
<div style="position:absolute;left:130px;top:970.2px;font-family:'Liberation Sans',sans-serif;font-size:18px;color:#111;white-space:nowrap;line-height:1;">4</div>
<svg style="position:absolute;left:203px;top:968px;" width="16" height="26" viewBox="0 0 16 26"><path d="M13 3 L4 24" stroke="#222" stroke-width="1.8"/></svg>
<div style="position:absolute;left:225.5px;top:962.5px;width:74px;height:36.5px;background:#fdfdfd;border:1px solid #d2d2d2;box-sizing:border-box;border-radius:3px"></div>
<div style="position:absolute;left:231px;top:970px;font-family:'Liberation Sans',sans-serif;font-size:18px;color:#111;white-space:nowrap;line-height:1;">4</div>
<svg style="position:absolute;left:279px;top:976px;" width="16" height="10" viewBox="0 0 16 10"><path d="M2 2 L7.5 7.5 L13 2" fill="none" stroke="#444" stroke-width="1.3"/></svg>
<svg style="position:absolute;left:319.7px;top:957.3px;" width="12" height="20" viewBox="0 0 12 20"><rect x="0.0" y="0.0" width="3" height="3" fill="#7c7f91"/><rect x="0.0" y="7.6" width="3" height="3" fill="#7c7f91"/><rect x="0.0" y="15.2" width="3" height="3" fill="#7c7f91"/><rect x="7.6" y="0.0" width="3" height="3" fill="#7c7f91"/><rect x="7.6" y="7.6" width="3" height="3" fill="#7c7f91"/><rect x="7.6" y="15.2" width="3" height="3" fill="#7c7f91"/></svg>
<div style="position:absolute;left:341.5px;top:935px;width:18.5px;height:19px;background:#f4f4f4;border:1.5px solid #6a6a6a;box-sizing:border-box;border-radius:3.5px"></div>
<div style="position:absolute;left:365px;top:932px;font-family:'Liberation Sans',sans-serif;font-size:18px;color:#1a1a1a;white-space:nowrap;line-height:1;">吸附</div>
<div style="position:absolute;left:341.5px;top:967px;width:224px;height:36.5px;background:#fff;border:1.5px solid #7e7e7e;box-sizing:border-box;border-radius:3px"></div>
<div style="position:absolute;left:348px;top:972.5px;width:188px;height:25.5px;background:#efefef;"></div>
<div style="position:absolute;left:349px;top:976px;font-family:'Liberation Sans',sans-serif;font-size:19px;color:#8a8a8a;white-space:nowrap;line-height:1;">1/8</div>
<svg style="position:absolute;left:544px;top:980px;" width="16" height="10" viewBox="0 0 16 10"><path d="M2 2 L7.5 7.5 L13 2" fill="none" stroke="#999" stroke-width="1.3"/></svg>
<svg style="position:absolute;left:577.3px;top:957.3px;" width="12" height="20" viewBox="0 0 12 20"><rect x="0.0" y="0.0" width="3" height="3" fill="#7c7f91"/><rect x="0.0" y="7.6" width="3" height="3" fill="#7c7f91"/><rect x="0.0" y="15.2" width="3" height="3" fill="#7c7f91"/><rect x="7.6" y="0.0" width="3" height="3" fill="#7c7f91"/><rect x="7.6" y="7.6" width="3" height="3" fill="#7c7f91"/><rect x="7.6" y="15.2" width="3" height="3" fill="#7c7f91"/></svg>
<div style="position:absolute;left:594.5px;top:945.5px;width:345px;height:44.5px;background:#f8f8f8;border:1.5px solid #c4c6cc;box-sizing:border-box"></div>
<div style="position:absolute;left:597.2px;top:948.2px;width:339.5px;height:39px;background:#32364a;"></div>
<div style="position:absolute;left:575.0px;top:951.3px;font-family:'Liberation Serif',serif;font-size:35px;color:#f2f2f2;white-space:nowrap;line-height:1;width:70px;text-align:center;font-weight:normal;transform:scale(0.86,1.0);transform-origin:50% 18.2px;">0</div>
<div style="position:absolute;left:595.0px;top:951.3px;font-family:'Liberation Serif',serif;font-size:35px;color:#f2f2f2;white-space:nowrap;line-height:1;width:70px;text-align:center;font-weight:normal;transform:scale(0.86,1.0);transform-origin:50% 18.2px;">0</div>
<div style="position:absolute;left:645.0px;top:954.0px;font-family:'Liberation Sans',sans-serif;font-size:31px;color:#f2f2f2;white-space:nowrap;line-height:1;width:62px;text-align:center;font-weight:300;">时</div>
<div style="position:absolute;left:685.0px;top:951.3px;font-family:'Liberation Serif',serif;font-size:35px;color:#f2f2f2;white-space:nowrap;line-height:1;width:70px;text-align:center;font-weight:normal;transform:scale(0.86,1.0);transform-origin:50% 18.2px;">0</div>
<div style="position:absolute;left:705.0px;top:951.3px;font-family:'Liberation Serif',serif;font-size:35px;color:#f2f2f2;white-space:nowrap;line-height:1;width:70px;text-align:center;font-weight:normal;transform:scale(0.86,1.0);transform-origin:50% 18.2px;">0</div>
<div style="position:absolute;left:754.5px;top:954.0px;font-family:'Liberation Sans',sans-serif;font-size:31px;color:#f2f2f2;white-space:nowrap;line-height:1;width:62px;text-align:center;font-weight:300;">分</div>
<div style="position:absolute;left:795.0px;top:951.3px;font-family:'Liberation Serif',serif;font-size:35px;color:#f2f2f2;white-space:nowrap;line-height:1;width:70px;text-align:center;font-weight:normal;transform:scale(0.86,1.0);transform-origin:50% 18.2px;">5</div>
<div style="position:absolute;left:815.0px;top:951.3px;font-family:'Liberation Serif',serif;font-size:35px;color:#f2f2f2;white-space:nowrap;line-height:1;width:70px;text-align:center;font-weight:normal;transform:scale(0.86,1.0);transform-origin:50% 18.2px;">5</div>
<div style="position:absolute;left:864.0px;top:954.0px;font-family:'Liberation Sans',sans-serif;font-size:31px;color:#f2f2f2;white-space:nowrap;line-height:1;width:62px;text-align:center;font-weight:300;">秒</div>
<svg style="position:absolute;left:917px;top:963px;" width="18" height="12" viewBox="0 0 18 12"><path d="M1.5 1.5 L16 1.5 L8.75 10 Z" fill="#f2f2f2"/></svg>
<div style="position:absolute;left:944.2px;top:922px;width:1.3px;height:94px;background:#d8d8d8;"></div>
<div style="position:absolute;left:948.5px;top:922px;width:1.3px;height:94px;background:#d8d8d8;"></div>
<svg style="position:absolute;left:954.5px;top:956.7px;" width="12" height="20" viewBox="0 0 12 20"><rect x="0.0" y="0.0" width="3" height="3" fill="#7c7f91"/><rect x="0.0" y="7.6" width="3" height="3" fill="#7c7f91"/><rect x="0.0" y="15.2" width="3" height="3" fill="#7c7f91"/><rect x="7.6" y="0.0" width="3" height="3" fill="#7c7f91"/><rect x="7.6" y="7.6" width="3" height="3" fill="#7c7f91"/><rect x="7.6" y="15.2" width="3" height="3" fill="#7c7f91"/></svg>
<div style="position:absolute;left:975px;top:930px;font-family:'Liberation Sans',sans-serif;font-size:18px;color:#1a1a1a;white-space:nowrap;line-height:1;">选区</div>
<div style="position:absolute;left:977.5px;top:965.5px;width:34px;height:34px;background:#dcdce2;border-radius:4px"></div>
<svg style="position:absolute;left:978px;top:966px;" width="30" height="30" viewBox="0 0 30 30"><g transform="translate(15.4,15.4)"><path d="M9.80 0.00 L9.79 0.43 L9.74 0.85 L9.65 1.27 L9.44 1.67 L8.95 1.98 L8.02 2.15 L7.09 2.24 L6.59 2.40 L6.34 2.63 L6.18 2.88 L6.04 3.14 L5.89 3.40 L5.74 3.66 L5.59 3.91 L5.45 4.18 L5.37 4.51 L5.48 5.02 L5.87 5.87 L6.19 6.76 L6.16 7.35 L5.93 7.72 L5.61 8.01 L5.26 8.26 L4.90 8.49 L4.52 8.69 L4.13 8.86 L3.73 8.99 L3.28 9.01 L2.76 8.74 L2.15 8.02 L1.61 7.26 L1.22 6.90 L0.90 6.81 L0.59 6.79 L0.30 6.80 L0.00 6.80 L-0.30 6.80 L-0.59 6.79 L-0.90 6.81 L-1.22 6.90 L-1.61 7.26 L-2.15 8.02 L-2.76 8.74 L-3.28 9.01 L-3.73 8.99 L-4.13 8.86 L-4.52 8.69 L-4.90 8.49 L-5.26 8.26 L-5.61 8.01 L-5.93 7.72 L-6.16 7.35 L-6.19 6.76 L-5.87 5.87 L-5.48 5.02 L-5.37 4.51 L-5.45 4.18 L-5.59 3.91 L-5.74 3.66 L-5.89 3.40 L-6.04 3.14 L-6.18 2.88 L-6.34 2.63 L-6.59 2.40 L-7.09 2.24 L-8.02 2.15 L-8.95 1.98 L-9.44 1.67 L-9.65 1.27 L-9.74 0.85 L-9.79 0.43 L-9.80 0.00 L-9.79 -0.43 L-9.74 -0.85 L-9.65 -1.27 L-9.44 -1.67 L-8.95 -1.98 L-8.02 -2.15 L-7.09 -2.24 L-6.59 -2.40 L-6.34 -2.63 L-6.18 -2.88 L-6.04 -3.14 L-5.89 -3.40 L-5.74 -3.66 L-5.59 -3.91 L-5.45 -4.18 L-5.37 -4.51 L-5.48 -5.02 L-5.87 -5.87 L-6.19 -6.76 L-6.16 -7.35 L-5.93 -7.72 L-5.61 -8.01 L-5.26 -8.26 L-4.90 -8.49 L-4.52 -8.69 L-4.13 -8.86 L-3.73 -8.99 L-3.28 -9.01 L-2.76 -8.74 L-2.15 -8.02 L-1.61 -7.26 L-1.22 -6.90 L-0.90 -6.81 L-0.59 -6.79 L-0.30 -6.80 L-0.00 -6.80 L0.30 -6.80 L0.59 -6.79 L0.90 -6.81 L1.22 -6.90 L1.61 -7.26 L2.15 -8.02 L2.76 -8.74 L3.28 -9.01 L3.73 -8.99 L4.13 -8.86 L4.52 -8.69 L4.90 -8.49 L5.26 -8.26 L5.61 -8.01 L5.93 -7.72 L6.16 -7.35 L6.19 -6.76 L5.87 -5.87 L5.48 -5.02 L5.37 -4.51 L5.45 -4.18 L5.59 -3.91 L5.74 -3.66 L5.89 -3.40 L6.04 -3.14 L6.18 -2.88 L6.34 -2.63 L6.59 -2.40 L7.09 -2.24 L8.02 -2.15 L8.95 -1.98 L9.44 -1.67 L9.65 -1.27 L9.74 -0.85 L9.79 -0.43 Z" fill="none" stroke="#333" stroke-width="1.6" stroke-linejoin="round"/><circle r="2.9" fill="none" stroke="#333" stroke-width="1.6"/></g></svg>
<div style="position:absolute;left:1020.5px;top:929.5px;width:321px;height:33px;background:#f8f8f8;border:1.5px solid #c4c6cc;box-sizing:border-box"></div>
<div style="position:absolute;left:1023.5px;top:932.0px;width:315px;height:28px;background:#32364a;"></div>
<div style="position:absolute;left:1007.5px;top:935.3px;font-family:'Liberation Serif',serif;font-size:24.5px;color:#f2f2f2;white-space:nowrap;line-height:1;width:49.0px;text-align:center;font-weight:normal;transform:scale(0.9,1.0);transform-origin:50% 12.7px;">0</div>
<div style="position:absolute;left:1024.5px;top:935.3px;font-family:'Liberation Serif',serif;font-size:24.5px;color:#f2f2f2;white-space:nowrap;line-height:1;width:49.0px;text-align:center;font-weight:normal;transform:scale(0.9,1.0);transform-origin:50% 12.7px;">0</div>
<div style="position:absolute;left:1059.0px;top:937.0px;font-family:'Liberation Sans',sans-serif;font-size:22px;color:#f2f2f2;white-space:nowrap;line-height:1;width:44px;text-align:center;font-weight:300;">时</div>
<div style="position:absolute;left:1087.5px;top:935.3px;font-family:'Liberation Serif',serif;font-size:24.5px;color:#f2f2f2;white-space:nowrap;line-height:1;width:49.0px;text-align:center;font-weight:normal;transform:scale(0.9,1.0);transform-origin:50% 12.7px;">0</div>
<div style="position:absolute;left:1104.5px;top:935.3px;font-family:'Liberation Serif',serif;font-size:24.5px;color:#f2f2f2;white-space:nowrap;line-height:1;width:49.0px;text-align:center;font-weight:normal;transform:scale(0.9,1.0);transform-origin:50% 12.7px;">0</div>
<div style="position:absolute;left:1138.5px;top:937.0px;font-family:'Liberation Sans',sans-serif;font-size:22px;color:#f2f2f2;white-space:nowrap;line-height:1;width:44px;text-align:center;font-weight:300;">分</div>
<div style="position:absolute;left:1166.5px;top:935.3px;font-family:'Liberation Serif',serif;font-size:24.5px;color:#f2f2f2;white-space:nowrap;line-height:1;width:49.0px;text-align:center;font-weight:normal;transform:scale(0.9,1.0);transform-origin:50% 12.7px;">5</div>
<div style="position:absolute;left:1184.5px;top:935.3px;font-family:'Liberation Serif',serif;font-size:24.5px;color:#f2f2f2;white-space:nowrap;line-height:1;width:49.0px;text-align:center;font-weight:normal;transform:scale(0.9,1.0);transform-origin:50% 12.7px;">4</div>
<div style="position:absolute;left:1201.5px;top:935.3px;font-family:'Liberation Serif',serif;font-size:24.5px;color:#f2f2f2;white-space:nowrap;line-height:1;width:49.0px;text-align:center;font-weight:normal;transform:scale(0.9,1.0);transform-origin:50% 12.7px;">.</div>
<div style="position:absolute;left:1211.5px;top:935.3px;font-family:'Liberation Serif',serif;font-size:24.5px;color:#f2f2f2;white-space:nowrap;line-height:1;width:49.0px;text-align:center;font-weight:normal;transform:scale(0.9,1.0);transform-origin:50% 12.7px;">8</div>
<div style="position:absolute;left:1229.5px;top:935.3px;font-family:'Liberation Serif',serif;font-size:24.5px;color:#f2f2f2;white-space:nowrap;line-height:1;width:49.0px;text-align:center;font-weight:normal;transform:scale(0.9,1.0);transform-origin:50% 12.7px;">1</div>
<div style="position:absolute;left:1246.5px;top:935.3px;font-family:'Liberation Serif',serif;font-size:24.5px;color:#f2f2f2;white-space:nowrap;line-height:1;width:49.0px;text-align:center;font-weight:normal;transform:scale(0.9,1.0);transform-origin:50% 12.7px;">7</div>
<div style="position:absolute;left:1281.0px;top:937.0px;font-family:'Liberation Sans',sans-serif;font-size:22px;color:#f2f2f2;white-space:nowrap;line-height:1;width:44px;text-align:center;font-weight:300;">秒</div>
<svg style="position:absolute;left:1320px;top:940.5px;" width="16" height="10" viewBox="0 0 16 10"><path d="M1 1 L15 1 L8 9 Z" fill="#f2f2f2"/></svg>
<div style="position:absolute;left:1020.5px;top:966px;width:321px;height:33px;background:#f8f8f8;border:1.5px solid #c4c6cc;box-sizing:border-box"></div>
<div style="position:absolute;left:1023.5px;top:968.5px;width:315px;height:28px;background:#32364a;"></div>
<div style="position:absolute;left:1007.5px;top:971.8px;font-family:'Liberation Serif',serif;font-size:24.5px;color:#f2f2f2;white-space:nowrap;line-height:1;width:49.0px;text-align:center;font-weight:normal;transform:scale(0.9,1.0);transform-origin:50% 12.7px;">0</div>
<div style="position:absolute;left:1024.5px;top:971.8px;font-family:'Liberation Serif',serif;font-size:24.5px;color:#f2f2f2;white-space:nowrap;line-height:1;width:49.0px;text-align:center;font-weight:normal;transform:scale(0.9,1.0);transform-origin:50% 12.7px;">0</div>
<div style="position:absolute;left:1059.0px;top:973.5px;font-family:'Liberation Sans',sans-serif;font-size:22px;color:#f2f2f2;white-space:nowrap;line-height:1;width:44px;text-align:center;font-weight:300;">时</div>
<div style="position:absolute;left:1087.5px;top:971.8px;font-family:'Liberation Serif',serif;font-size:24.5px;color:#f2f2f2;white-space:nowrap;line-height:1;width:49.0px;text-align:center;font-weight:normal;transform:scale(0.9,1.0);transform-origin:50% 12.7px;">0</div>
<div style="position:absolute;left:1104.5px;top:971.8px;font-family:'Liberation Serif',serif;font-size:24.5px;color:#f2f2f2;white-space:nowrap;line-height:1;width:49.0px;text-align:center;font-weight:normal;transform:scale(0.9,1.0);transform-origin:50% 12.7px;">0</div>
<div style="position:absolute;left:1138.5px;top:973.5px;font-family:'Liberation Sans',sans-serif;font-size:22px;color:#f2f2f2;white-space:nowrap;line-height:1;width:44px;text-align:center;font-weight:300;">分</div>
<div style="position:absolute;left:1166.5px;top:971.8px;font-family:'Liberation Serif',serif;font-size:24.5px;color:#f2f2f2;white-space:nowrap;line-height:1;width:49.0px;text-align:center;font-weight:normal;transform:scale(0.9,1.0);transform-origin:50% 12.7px;">5</div>
<div style="position:absolute;left:1184.5px;top:971.8px;font-family:'Liberation Serif',serif;font-size:24.5px;color:#f2f2f2;white-space:nowrap;line-height:1;width:49.0px;text-align:center;font-weight:normal;transform:scale(0.9,1.0);transform-origin:50% 12.7px;">4</div>
<div style="position:absolute;left:1201.5px;top:971.8px;font-family:'Liberation Serif',serif;font-size:24.5px;color:#f2f2f2;white-space:nowrap;line-height:1;width:49.0px;text-align:center;font-weight:normal;transform:scale(0.9,1.0);transform-origin:50% 12.7px;">.</div>
<div style="position:absolute;left:1211.5px;top:971.8px;font-family:'Liberation Serif',serif;font-size:24.5px;color:#f2f2f2;white-space:nowrap;line-height:1;width:49.0px;text-align:center;font-weight:normal;transform:scale(0.9,1.0);transform-origin:50% 12.7px;">8</div>
<div style="position:absolute;left:1229.5px;top:971.8px;font-family:'Liberation Serif',serif;font-size:24.5px;color:#f2f2f2;white-space:nowrap;line-height:1;width:49.0px;text-align:center;font-weight:normal;transform:scale(0.9,1.0);transform-origin:50% 12.7px;">1</div>
<div style="position:absolute;left:1246.5px;top:971.8px;font-family:'Liberation Serif',serif;font-size:24.5px;color:#f2f2f2;white-space:nowrap;line-height:1;width:49.0px;text-align:center;font-weight:normal;transform:scale(0.9,1.0);transform-origin:50% 12.7px;">7</div>
<div style="position:absolute;left:1281.0px;top:973.5px;font-family:'Liberation Sans',sans-serif;font-size:22px;color:#f2f2f2;white-space:nowrap;line-height:1;width:44px;text-align:center;font-weight:300;">秒</div>
<svg style="position:absolute;left:1320px;top:977px;" width="16" height="10" viewBox="0 0 16 10"><path d="M1 1 L15 1 L8 9 Z" fill="#f2f2f2"/></svg>
<svg style="position:absolute;left:1353.4px;top:933.7px;" width="12" height="20" viewBox="0 0 12 20"><rect x="0.0" y="0.0" width="3" height="3" fill="#7c7f91"/><rect x="0.0" y="7.6" width="3" height="3" fill="#7c7f91"/><rect x="0.0" y="15.2" width="3" height="3" fill="#7c7f91"/><rect x="7.6" y="0.0" width="3" height="3" fill="#7c7f91"/><rect x="7.6" y="7.6" width="3" height="3" fill="#7c7f91"/><rect x="7.6" y="15.2" width="3" height="3" fill="#7c7f91"/></svg>
<div style="position:absolute;left:1367.5px;top:924.5px;width:40px;height:40px;background:#dcdce2;border-radius:5px"></div>
<svg style="position:absolute;left:1374px;top:931px;" width="26" height="26" viewBox="0 0 26 26"><path d="M2.5 2.5 L23.5 13 L2.5 23.5 Z" fill="#4a8a6b"/></svg>
<div style="position:absolute;left:1415.5px;top:935px;width:7px;height:1.8px;background:#222;"></div>
<div style="position:absolute;left:1610.5px;top:935px;width:8px;height:1.8px;background:#222;"></div>
<div style="position:absolute;left:1613.6px;top:931.5px;width:1.8px;height:8px;background:#222;"></div>
<svg style="position:absolute;left:1415.5px;top:942px;" width="210" height="12" viewBox="0 0 210 12"><rect x="0" y="7" width="207" height="2.5" fill="#c9d5e1"/><rect x="1.0" y="1" width="1.2" height="6" fill="#c9d5e1"/><rect x="15.6" y="4" width="1.2" height="3.5" fill="#c9d5e1"/><rect x="30.2" y="4" width="1.2" height="3.5" fill="#c9d5e1"/><rect x="44.8" y="4" width="1.2" height="3.5" fill="#c9d5e1"/><rect x="88.6" y="4" width="1.2" height="3.5" fill="#c9d5e1"/><rect x="103.2" y="4" width="1.2" height="3.5" fill="#c9d5e1"/><rect x="117.8" y="4" width="1.2" height="3.5" fill="#c9d5e1"/><rect x="132.4" y="4" width="1.2" height="3.5" fill="#c9d5e1"/><rect x="147.0" y="4" width="1.2" height="3.5" fill="#c9d5e1"/><rect x="161.6" y="4" width="1.2" height="3.5" fill="#c9d5e1"/><rect x="176.2" y="4" width="1.2" height="3.5" fill="#c9d5e1"/><rect x="190.8" y="4" width="1.2" height="3.5" fill="#c9d5e1"/><rect x="205.4" y="1" width="1.2" height="6" fill="#c9d5e1"/></svg>
<svg style="position:absolute;left:1474.5px;top:940px;" width="20" height="20" viewBox="0 0 20 20"><circle cx="9.6" cy="10" r="8.2" fill="#f8f8f8" stroke="#222" stroke-width="1.7"/></svg>
<div style="position:absolute;left:1631.5px;top:922px;width:1.3px;height:46px;background:#d8d8d8;"></div>
<div style="position:absolute;left:1636px;top:922px;width:1.3px;height:46px;background:#d8d8d8;"></div>
<div style="position:absolute;left:1350px;top:968px;width:389px;height:1.3px;background:#dadada;"></div>
</body></html>
